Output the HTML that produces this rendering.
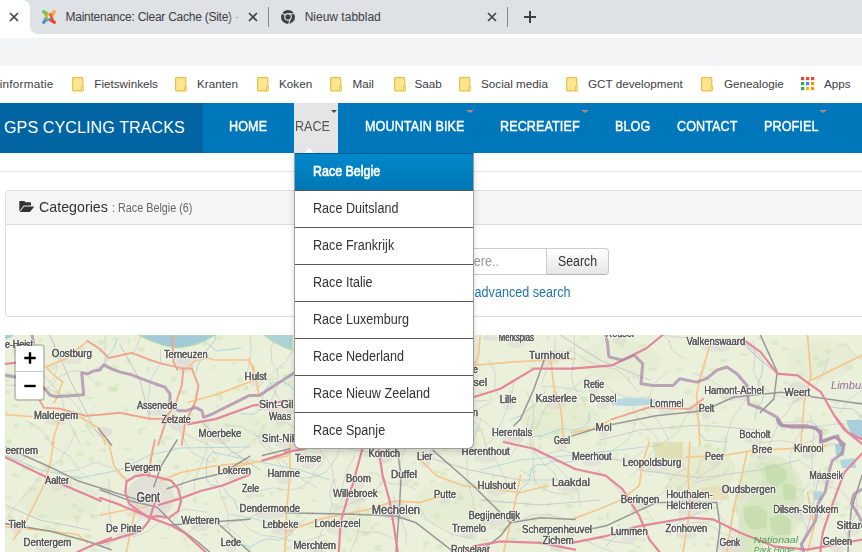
<!DOCTYPE html>
<html><head><meta charset="utf-8">
<style>
*{box-sizing:border-box}
html,body{margin:0;padding:0;width:862px;height:552px;overflow:hidden;background:#fff;font-family:"Liberation Sans",sans-serif}
.a{position:absolute}
#tabs{left:0;top:0;width:862px;height:34px;background:#dee1e6}
.tt{font-size:12px;color:#3c4043;white-space:nowrap}
#omni{left:0;top:38px;width:862px;height:28px;background:#f1f3f4}
.bm{font-size:11.7px;color:#3c4043;white-space:nowrap;top:77px}
.fold{top:77px;width:12px;height:15px}
#nav{left:0;top:103px;width:862px;height:50px;background:#0077bb}
#brand{left:0;top:103px;width:203px;height:50px;background:#0065a2}
.ni{color:#fff;font-weight:normal;-webkit-text-stroke:.45px #fff;font-size:15px;top:117px;white-space:nowrap;letter-spacing:.1px;transform:scaleX(.84);transform-origin:0 0}
.car{width:0;height:0;border-left:4px solid transparent;border-right:4px solid transparent;border-top:3.5px solid #a88f7f}
#dd{left:294px;top:153px;width:180px;height:296px;background:#fff;border:1px solid rgba(0,0,0,.38);border-top:none;border-radius:0 0 6px 6px;box-shadow:0 3px 6px rgba(0,0,0,.15)}
.di{position:absolute;left:0;width:178px;height:37px;border-top:1px solid #555;font-size:14px;color:#333;padding-left:18px;line-height:35px;white-space:nowrap}.di span{display:inline-block;transform:scaleX(.9);transform-origin:0 50%}.sx{display:inline-block;transform-origin:0 50%}
.lb{fill:#5a5a5a;stroke:#fff;stroke-width:2.4px;stroke-opacity:.65;paint-order:stroke;stroke-linejoin:round}.lt{fill:#5a5a5a;stroke:#5a5a5a;stroke-width:.3px}
</style></head><body>
<!-- tab strip -->
<div class="a" id="tabs"></div>
<div class="a" style="left:0;top:0;width:30px;height:38px;background:#fff;border-top-right-radius:8px"></div>
<div class="a" style="left:30px;top:26px;width:8px;height:8px;background:#fff"></div>
<div class="a" style="left:30px;top:18px;width:16px;height:16px;background:#dee1e6;border-bottom-left-radius:8px"></div>
<svg class="a" style="left:9px;top:12px" width="10" height="10" viewBox="0 0 10 10"><path d="M1 1L9 9M9 1L1 9" stroke="#3c4043" stroke-width="1.6"/></svg>
<svg class="a" style="left:41px;top:9px" width="16" height="16" viewBox="0 0 16 16" fill="none" stroke-linecap="round" stroke-linejoin="round" stroke-width="2.1">
<path d="M2.6 13.4L4.2 9.6M3.6 12.4L10.6 9.4" stroke="#5091cd"/>
<path d="M2.6 2.6L6.4 4.2M3.6 3.6L6.6 10.6" stroke="#7ac143"/>
<path d="M13.4 2.6L11.8 6.4M12.4 3.6L5.4 6.6" stroke="#f9a541"/>
<path d="M13.4 13.4L9.6 11.8M12.4 12.4L9.4 5.4" stroke="#f44321"/>
<circle cx="2.8" cy="2.8" r="1.7" fill="#7ac143"/><circle cx="13.2" cy="2.8" r="1.7" fill="#f9a541"/><circle cx="13.2" cy="13.2" r="1.7" fill="#f44321"/><circle cx="2.8" cy="13.2" r="1.7" fill="#5091cd"/>
</svg>
<div class="a tt" style="left:65.5px;top:10px;letter-spacing:-0.25px">Maintenance: Clear Cache (Site) - Ad</div>
<div class="a" style="left:230px;top:4px;width:14px;height:26px;background:linear-gradient(90deg,rgba(222,225,230,0.3),#dee1e6 80%)"></div>
<div class="a" style="left:244px;top:4px;width:22px;height:26px;background:#dee1e6"></div>
<svg class="a" style="left:248px;top:12px" width="10" height="10" viewBox="0 0 10 10"><path d="M1 1L9 9M9 1L1 9" stroke="#3c4043" stroke-width="1.6"/></svg>
<div class="a" style="left:268px;top:7px;width:1px;height:20px;background:#80868b"></div>
<svg class="a" style="left:280px;top:9px" width="16" height="16" viewBox="0 0 16 16">
<circle cx="8" cy="7.9" r="7" fill="#3c4043"/>
<circle cx="8" cy="7.9" r="3.8" fill="#dee1e6"/>
<circle cx="8" cy="7.9" r="2.6" fill="#3c4043"/>
<path d="M8.2 4.7H15.6M5.2 6.3L1.3 3.6M10.1 10.6L8.6 15.2" stroke="#dee1e6" stroke-width="1.1"/>
</svg>
<div class="a tt" style="left:304.7px;top:10px;">Nieuw tabblad</div>
<svg class="a" style="left:487px;top:12px" width="10" height="10" viewBox="0 0 10 10"><path d="M1 1L9 9M9 1L1 9" stroke="#3c4043" stroke-width="1.6"/></svg>
<div class="a" style="left:507px;top:7px;width:1px;height:20px;background:#80868b"></div>
<svg class="a" style="left:523px;top:10px" width="14" height="14" viewBox="0 0 14 14"><path d="M7 1V13M1 7H13" stroke="#3c4043" stroke-width="2"/></svg>
<!-- toolbar -->
<div class="a" id="omni"></div>
<!-- bookmarks -->
<div class="a bm" style="right:808.5px;letter-spacing:.25px">informatie</div>
<svg class="a fold" style="left:72px" width="12" height="15" viewBox="0 0 12 15"><rect x="0.6" y="0.6" width="10.2" height="13.3" rx="0.8" fill="#fde68f" stroke="#e9c04a" stroke-width="1.2"/><rect x="9.4" y="9.2" width="2.3" height="4.8" rx="0.8" fill="#fde68f" stroke="#e9c04a" stroke-width="1"/></svg><div class="a bm" style="left:94.3px">Fietswinkels</div>
<svg class="a fold" style="left:175px" width="12" height="15" viewBox="0 0 12 15"><rect x="0.6" y="0.6" width="10.2" height="13.3" rx="0.8" fill="#fde68f" stroke="#e9c04a" stroke-width="1.2"/><rect x="9.4" y="9.2" width="2.3" height="4.8" rx="0.8" fill="#fde68f" stroke="#e9c04a" stroke-width="1"/></svg><div class="a bm" style="left:197px">Kranten</div>
<svg class="a fold" style="left:256.5px" width="12" height="15" viewBox="0 0 12 15"><rect x="0.6" y="0.6" width="10.2" height="13.3" rx="0.8" fill="#fde68f" stroke="#e9c04a" stroke-width="1.2"/><rect x="9.4" y="9.2" width="2.3" height="4.8" rx="0.8" fill="#fde68f" stroke="#e9c04a" stroke-width="1"/></svg><div class="a bm" style="left:279px">Koken</div>
<svg class="a fold" style="left:330px" width="12" height="15" viewBox="0 0 12 15"><rect x="0.6" y="0.6" width="10.2" height="13.3" rx="0.8" fill="#fde68f" stroke="#e9c04a" stroke-width="1.2"/><rect x="9.4" y="9.2" width="2.3" height="4.8" rx="0.8" fill="#fde68f" stroke="#e9c04a" stroke-width="1"/></svg><div class="a bm" style="left:352.5px">Mail</div>
<svg class="a fold" style="left:394px" width="12" height="15" viewBox="0 0 12 15"><rect x="0.6" y="0.6" width="10.2" height="13.3" rx="0.8" fill="#fde68f" stroke="#e9c04a" stroke-width="1.2"/><rect x="9.4" y="9.2" width="2.3" height="4.8" rx="0.8" fill="#fde68f" stroke="#e9c04a" stroke-width="1"/></svg><div class="a bm" style="left:414.5px">Saab</div>
<svg class="a fold" style="left:458.5px" width="12" height="15" viewBox="0 0 12 15"><rect x="0.6" y="0.6" width="10.2" height="13.3" rx="0.8" fill="#fde68f" stroke="#e9c04a" stroke-width="1.2"/><rect x="9.4" y="9.2" width="2.3" height="4.8" rx="0.8" fill="#fde68f" stroke="#e9c04a" stroke-width="1"/></svg><div class="a bm" style="left:481px">Social media</div>
<svg class="a fold" style="left:566px" width="12" height="15" viewBox="0 0 12 15"><rect x="0.6" y="0.6" width="10.2" height="13.3" rx="0.8" fill="#fde68f" stroke="#e9c04a" stroke-width="1.2"/><rect x="9.4" y="9.2" width="2.3" height="4.8" rx="0.8" fill="#fde68f" stroke="#e9c04a" stroke-width="1"/></svg><div class="a bm" style="left:588px">GCT development</div>
<svg class="a fold" style="left:701px" width="12" height="15" viewBox="0 0 12 15"><rect x="0.6" y="0.6" width="10.2" height="13.3" rx="0.8" fill="#fde68f" stroke="#e9c04a" stroke-width="1.2"/><rect x="9.4" y="9.2" width="2.3" height="4.8" rx="0.8" fill="#fde68f" stroke="#e9c04a" stroke-width="1"/></svg><div class="a bm" style="left:724px">Genealogie</div>
<svg class="a" style="left:800px;top:76px" width="15" height="15" viewBox="0 0 15 15"><rect x="1" y="1" width="3.2" height="3.2" fill="#ea4335"/><rect x="6" y="1" width="3.2" height="3.2" fill="#ea4335"/><rect x="11" y="1" width="3.2" height="3.2" fill="#ea4335"/><rect x="1" y="6" width="3.2" height="3.2" fill="#34a853"/><rect x="6" y="6" width="3.2" height="3.2" fill="#4285f4"/><rect x="11" y="6" width="3.2" height="3.2" fill="#f29900"/><rect x="1" y="11" width="3.2" height="3.2" fill="#34a853"/><rect x="6" y="11" width="3.2" height="3.2" fill="#fbbc04"/><rect x="11" y="11" width="3.2" height="3.2" fill="#f29900"/></svg>
<div class="a bm" style="left:824px">Apps</div>
<!-- nav -->
<div class="a" id="nav"></div>
<div class="a" id="brand"></div>
<div class="a" style="left:4px;top:119px;font-size:16px;color:#fff;white-space:nowrap;letter-spacing:.14px">GPS CYCLING TRACKS</div>
<div class="a ni" style="left:229px">HOME</div>
<div class="a" style="left:294px;top:103px;width:44px;height:50px;background:#e5e5e5"></div>
<div class="a ni" style="left:295px;color:#555;-webkit-text-stroke:0;letter-spacing:0;transform:scaleX(.84)">RACE</div>
<div class="a car" style="left:331px;top:110px;border-top-color:#4a4a4a;border-top-width:3.5px;border-left-width:3.3px;border-right-width:3.3px"></div>
<div class="a ni" style="left:365px">MOUNTAIN BIKE</div>
<div class="a car" style="left:465.5px;top:110px"></div>
<div class="a ni" style="left:500px">RECREATIEF</div>
<div class="a car" style="left:581px;top:110px"></div>
<div class="a ni" style="left:615px">BLOG</div>
<div class="a ni" style="left:677px">CONTACT</div>
<div class="a ni" style="left:764px">PROFIEL</div>
<div class="a car" style="left:819px;top:110px"></div>
<!-- page -->
<div class="a" style="left:0;top:171px;width:862px;height:1px;background:#e5e5e5"></div>
<div class="a" style="left:5px;top:190px;width:870px;height:127px;border:1px solid #ddd;border-radius:4px;background:#fff"></div>
<div class="a" style="left:6px;top:191px;width:870px;height:34px;background:#f5f5f5;border-bottom:1px solid #ddd;border-radius:3px 0 0 0"></div>
<svg class="a" style="left:19px;top:200px" width="16" height="13" viewBox="0 0 16 13"><path d="M0.3 1.5Q0.3 0.9 0.9 0.9H5.4L6.6 2.3H11.3Q12 2.3 12 3V5.5H4.7L0.3 11.3Z" fill="#333"/><path d="M5.1 6.5H15.3L10.9 12H0.7Z" fill="#333"/></svg>
<div class="a" style="left:39px;top:198px;font-size:15px;color:#333;white-space:nowrap"><span class="sx" style="transform:scaleX(.95)">Categories</span></div>
<div class="a" style="left:112px;top:201px;font-size:12px;color:#666;white-space:nowrap"><span class="sx" style="transform:scaleX(.9)">: Race Belgie (6)</span></div>
<div class="a" style="left:420px;top:248px;width:127px;height:27px;border:1px solid #ccc;background:#fff;font-size:14px;color:#999;line-height:25px;overflow:hidden"><span class="sx" style="position:absolute;right:47px;transform:scaleX(.9);transform-origin:100% 50%;white-space:nowrap">Search here..</span></div>
<div class="a" style="left:546px;top:248px;width:63px;height:27px;border:1px solid #ccc;border-bottom-color:#b3b3b3;border-radius:0 4px 4px 0;background:linear-gradient(#fff,#e6e6e6);font-size:14px;color:#333;line-height:25px;padding-left:11px;white-space:nowrap"><span class="sx" style="transform:scaleX(.88)">Search</span></div>
<div class="a" style="left:420px;top:284px;font-size:14px;color:#1f72b4;white-space:nowrap;width:151px;text-align:right"><span class="sx" style="transform:scaleX(.9);transform-origin:100% 50%">Show advanced search</span></div>
<!-- map -->
<div class="a" style="left:5px;top:335px;width:857px;height:217px;overflow:hidden;background:#ebf0db"><svg style="position:absolute;left:0;top:0;filter:blur(.35px)" width="857" height="217" viewBox="5 335 857 217" font-family="Liberation Sans, sans-serif"><rect x="5" y="335" width="857" height="217" fill="#ebf0db"/><ellipse cx="60" cy="500" rx="40" ry="20" fill="#e2ebcf" opacity=".6"/><ellipse cx="250" cy="430" rx="50" ry="15" fill="#e3ecd0" opacity=".6"/><ellipse cx="460" cy="505" rx="45" ry="25" fill="#e1ebce" opacity=".6"/><ellipse cx="560" cy="420" rx="40" ry="20" fill="#e0eacc" opacity=".6"/><ellipse cx="620" cy="360" rx="40" ry="20" fill="#e2ebcf" opacity=".6"/><ellipse cx="770" cy="500" rx="35" ry="45" fill="#d8e6c2" opacity=".6"/><ellipse cx="700" cy="470" rx="35" ry="25" fill="#e0e7c6" opacity=".6"/><ellipse cx="19.0" cy="351.0" rx="7.0" ry="4.0" fill="#dcd9d3" opacity=".55"/><ellipse cx="71.9" cy="359.9" rx="10.1" ry="4.0" fill="#dcd9d3" opacity=".55"/><ellipse cx="185.8" cy="360.5" rx="10.9" ry="4.0" fill="#dcd9d3" opacity=".55"/><ellipse cx="255.7" cy="383.4" rx="5.6" ry="4.0" fill="#dcd9d3" opacity=".55"/><ellipse cx="157.2" cy="412.0" rx="10.1" ry="4.0" fill="#dcd9d3" opacity=".55"/><ellipse cx="176.2" cy="426.1" rx="7.3" ry="4.0" fill="#dcd9d3" opacity=".55"/><ellipse cx="56.0" cy="421.7" rx="11.0" ry="4.0" fill="#dcd9d3" opacity=".55"/><ellipse cx="283.0" cy="411.0" rx="12.0" ry="4.0" fill="#dcd9d3" opacity=".55"/><ellipse cx="280.0" cy="422.8" rx="5.5" ry="4.0" fill="#dcd9d3" opacity=".55"/><ellipse cx="219.9" cy="440.2" rx="10.7" ry="4.0" fill="#dcd9d3" opacity=".55"/><ellipse cx="288.4" cy="444.6" rx="13.3" ry="4.0" fill="#dcd9d3" opacity=".55"/><ellipse cx="18.5" cy="457.0" rx="9.8" ry="4.0" fill="#dcd9d3" opacity=".55"/><ellipse cx="57.0" cy="487.0" rx="6.0" ry="4.0" fill="#dcd9d3" opacity=".55"/><ellipse cx="142.7" cy="474.4" rx="9.1" ry="4.0" fill="#dcd9d3" opacity=".55"/><ellipse cx="148.2" cy="503.4" rx="5.9" ry="4.0" fill="#dcd9d3" opacity=".55"/><ellipse cx="234.3" cy="477.0" rx="8.3" ry="4.0" fill="#dcd9d3" opacity=".55"/><ellipse cx="283.8" cy="480.0" rx="8.1" ry="4.0" fill="#dcd9d3" opacity=".55"/><ellipse cx="250.5" cy="495.0" rx="5.0" ry="4.0" fill="#dcd9d3" opacity=".55"/><ellipse cx="269.8" cy="515.0" rx="15.1" ry="4.0" fill="#dcd9d3" opacity=".55"/><ellipse cx="17.2" cy="530.8" rx="5.0" ry="4.0" fill="#dcd9d3" opacity=".55"/><ellipse cx="123.8" cy="534.7" rx="8.9" ry="4.0" fill="#dcd9d3" opacity=".55"/><ellipse cx="200.4" cy="527.2" rx="9.6" ry="4.0" fill="#dcd9d3" opacity=".55"/><ellipse cx="280.4" cy="531.0" rx="9.0" ry="4.0" fill="#dcd9d3" opacity=".55"/><ellipse cx="47.5" cy="549.0" rx="11.9" ry="4.0" fill="#dcd9d3" opacity=".55"/><ellipse cx="230.9" cy="548.5" rx="5.1" ry="4.0" fill="#dcd9d3" opacity=".55"/><ellipse cx="308.1" cy="465.0" rx="6.6" ry="4.0" fill="#dcd9d3" opacity=".55"/><ellipse cx="384.2" cy="460.0" rx="7.9" ry="4.0" fill="#dcd9d3" opacity=".55"/><ellipse cx="424.7" cy="463.0" rx="5.0" ry="4.0" fill="#dcd9d3" opacity=".55"/><ellipse cx="485.7" cy="458.4" rx="12.0" ry="4.0" fill="#dcd9d3" opacity=".55"/><ellipse cx="358.4" cy="485.0" rx="6.2" ry="4.0" fill="#dcd9d3" opacity=".55"/><ellipse cx="404.0" cy="481.0" rx="6.5" ry="4.0" fill="#dcd9d3" opacity=".55"/><ellipse cx="355.2" cy="500.0" rx="11.1" ry="4.0" fill="#dcd9d3" opacity=".55"/><ellipse cx="496.8" cy="491.7" rx="9.6" ry="4.0" fill="#dcd9d3" opacity=".55"/><ellipse cx="571.0" cy="489.4" rx="9.5" ry="4.0" fill="#dcd9d3" opacity=".55"/><ellipse cx="445.0" cy="501.0" rx="5.5" ry="4.0" fill="#dcd9d3" opacity=".55"/><ellipse cx="395.9" cy="516.3" rx="12.0" ry="4.0" fill="#dcd9d3" opacity=".55"/><ellipse cx="494.2" cy="522.0" rx="12.9" ry="4.0" fill="#dcd9d3" opacity=".55"/><ellipse cx="337.6" cy="529.8" rx="11.5" ry="4.0" fill="#dcd9d3" opacity=".55"/><ellipse cx="469.0" cy="534.8" rx="8.5" ry="4.0" fill="#dcd9d3" opacity=".55"/><ellipse cx="557.0" cy="535.8" rx="17.5" ry="4.0" fill="#dcd9d3" opacity=".55"/><ellipse cx="314.7" cy="551.6" rx="10.7" ry="4.0" fill="#dcd9d3" opacity=".55"/><ellipse cx="558.0" cy="547.0" rx="7.8" ry="4.0" fill="#dcd9d3" opacity=".55"/><ellipse cx="470.4" cy="556.0" rx="9.8" ry="4.0" fill="#dcd9d3" opacity=".55"/><ellipse cx="516.4" cy="343.7" rx="8.8" ry="4.0" fill="#dcd9d3" opacity=".55"/><ellipse cx="549.1" cy="361.5" rx="10.1" ry="4.0" fill="#dcd9d3" opacity=".55"/><ellipse cx="464.0" cy="376.0" rx="7.0" ry="4.0" fill="#dcd9d3" opacity=".55"/><ellipse cx="461.0" cy="389.0" rx="13.0" ry="4.0" fill="#dcd9d3" opacity=".55"/><ellipse cx="454.0" cy="419.0" rx="12.0" ry="4.0" fill="#dcd9d3" opacity=".55"/><ellipse cx="508.1" cy="406.0" rx="5.0" ry="4.0" fill="#dcd9d3" opacity=".55"/><ellipse cx="556.4" cy="405.0" rx="10.3" ry="4.0" fill="#dcd9d3" opacity=".55"/><ellipse cx="512.1" cy="439.0" rx="10.1" ry="4.0" fill="#dcd9d3" opacity=".55"/><ellipse cx="562.0" cy="447.0" rx="5.0" ry="4.0" fill="#dcd9d3" opacity=".55"/><ellipse cx="591.9" cy="462.5" rx="9.9" ry="4.0" fill="#dcd9d3" opacity=".55"/><ellipse cx="619.8" cy="340.0" rx="7.1" ry="4.0" fill="#dcd9d3" opacity=".55"/><ellipse cx="715.8" cy="347.7" rx="14.7" ry="4.0" fill="#dcd9d3" opacity=".55"/><ellipse cx="593.9" cy="390.8" rx="5.1" ry="4.0" fill="#dcd9d3" opacity=".55"/><ellipse cx="603.0" cy="405.3" rx="6.7" ry="4.0" fill="#dcd9d3" opacity=".55"/><ellipse cx="666.9" cy="410.3" rx="8.4" ry="4.0" fill="#dcd9d3" opacity=".55"/><ellipse cx="706.5" cy="415.4" rx="5.0" ry="4.0" fill="#dcd9d3" opacity=".55"/><ellipse cx="734.0" cy="396.8" rx="14.9" ry="4.0" fill="#dcd9d3" opacity=".55"/><ellipse cx="797.4" cy="398.5" rx="6.4" ry="4.0" fill="#dcd9d3" opacity=".55"/><ellipse cx="603.7" cy="433.5" rx="5.0" ry="4.0" fill="#dcd9d3" opacity=".55"/><ellipse cx="754.9" cy="440.6" rx="7.8" ry="4.0" fill="#dcd9d3" opacity=".55"/><ellipse cx="652.0" cy="469.2" rx="14.7" ry="4.0" fill="#dcd9d3" opacity=".55"/><ellipse cx="714.5" cy="462.5" rx="5.0" ry="4.0" fill="#dcd9d3" opacity=".55"/><ellipse cx="762.1" cy="456.4" rx="5.1" ry="4.0" fill="#dcd9d3" opacity=".55"/><ellipse cx="808.9" cy="455.0" rx="7.4" ry="4.0" fill="#dcd9d3" opacity=".55"/><ellipse cx="826.1" cy="481.6" rx="8.4" ry="4.0" fill="#dcd9d3" opacity=".55"/><ellipse cx="640.1" cy="506.2" rx="9.7" ry="4.0" fill="#dcd9d3" opacity=".55"/><ellipse cx="689.4" cy="501.2" rx="11.6" ry="4.0" fill="#dcd9d3" opacity=".55"/><ellipse cx="689.4" cy="512.0" rx="11.6" ry="4.0" fill="#dcd9d3" opacity=".55"/><ellipse cx="748.7" cy="496.0" rx="13.5" ry="4.0" fill="#dcd9d3" opacity=".55"/><ellipse cx="805.9" cy="516.3" rx="16.3" ry="4.0" fill="#dcd9d3" opacity=".55"/><ellipse cx="851.7" cy="532.2" rx="7.7" ry="4.0" fill="#dcd9d3" opacity=".55"/><ellipse cx="629.2" cy="538.2" rx="9.2" ry="4.0" fill="#dcd9d3" opacity=".55"/><ellipse cx="686.4" cy="534.8" rx="10.4" ry="4.0" fill="#dcd9d3" opacity=".55"/><ellipse cx="729.8" cy="549.3" rx="5.2" ry="4.0" fill="#dcd9d3" opacity=".55"/><ellipse cx="837.4" cy="548.3" rx="7.3" ry="4.0" fill="#dcd9d3" opacity=".55"/><ellipse cx="820" cy="360" rx="35" ry="20" fill="#e2ebcf" opacity=".6"/><ellipse cx="540" cy="530" rx="30" ry="15" fill="#e2ebcf" opacity=".6"/><ellipse cx="350" cy="520" rx="20" ry="20" fill="#e2ebcf" opacity=".6"/><ellipse cx="282.5" cy="367.7" rx="3.3" ry="1.2" fill="#cfe3b8" opacity=".5"/><ellipse cx="464.3" cy="414.4" rx="1.4" ry="2.1" fill="#cfe3b8" opacity=".5"/><ellipse cx="37.1" cy="429.1" rx="1.4" ry="1.2" fill="#cfe3b8" opacity=".5"/><ellipse cx="368.8" cy="514.4" rx="1.6" ry="1.5" fill="#cfe3b8" opacity=".5"/><ellipse cx="542.7" cy="540.7" rx="3.1" ry="1.9" fill="#cfe3b8" opacity=".5"/><ellipse cx="841.7" cy="345.1" rx="4.0" ry="1.6" fill="#cfe3b8" opacity=".5"/><ellipse cx="128.6" cy="360.6" rx="2.2" ry="2.8" fill="#cfe3b8" opacity=".5"/><ellipse cx="159.9" cy="461.2" rx="3.3" ry="1.8" fill="#cfe3b8" opacity=".5"/><ellipse cx="474.4" cy="348.6" rx="1.4" ry="1.5" fill="#cfe3b8" opacity=".5"/><ellipse cx="588.1" cy="427.8" rx="2.2" ry="2.3" fill="#cfe3b8" opacity=".5"/><ellipse cx="393.4" cy="400.0" rx="3.8" ry="2.5" fill="#cfe3b8" opacity=".5"/><ellipse cx="214.2" cy="459.6" rx="2.9" ry="2.9" fill="#cfe3b8" opacity=".5"/><ellipse cx="630.1" cy="397.5" rx="4.4" ry="1.3" fill="#cfe3b8" opacity=".5"/><ellipse cx="363.3" cy="499.3" rx="1.7" ry="2.1" fill="#cfe3b8" opacity=".5"/><ellipse cx="38.6" cy="480.0" rx="3.7" ry="2.3" fill="#cfe3b8" opacity=".5"/><ellipse cx="755.3" cy="403.1" rx="3.5" ry="2.3" fill="#cfe3b8" opacity=".5"/><ellipse cx="502.0" cy="434.0" rx="4.0" ry="3.1" fill="#cfe3b8" opacity=".5"/><ellipse cx="411.3" cy="479.1" rx="1.4" ry="2.5" fill="#cfe3b8" opacity=".5"/><ellipse cx="559.6" cy="550.5" rx="3.9" ry="1.6" fill="#cfe3b8" opacity=".5"/><ellipse cx="335.6" cy="480.1" rx="1.3" ry="2.0" fill="#cfe3b8" opacity=".5"/><ellipse cx="149.0" cy="360.4" rx="1.4" ry="2.7" fill="#cfe3b8" opacity=".5"/><ellipse cx="115.8" cy="388.7" rx="2.5" ry="2.9" fill="#cfe3b8" opacity=".5"/><ellipse cx="74.1" cy="432.5" rx="3.0" ry="2.9" fill="#cfe3b8" opacity=".5"/><ellipse cx="707.1" cy="522.5" rx="2.1" ry="1.9" fill="#cfe3b8" opacity=".5"/><ellipse cx="312.5" cy="526.9" rx="4.4" ry="1.3" fill="#cfe3b8" opacity=".5"/><ellipse cx="156.0" cy="385.3" rx="2.0" ry="2.1" fill="#cfe3b8" opacity=".5"/><ellipse cx="509.9" cy="392.0" rx="1.2" ry="1.9" fill="#cfe3b8" opacity=".5"/><ellipse cx="321.5" cy="457.9" rx="4.3" ry="2.5" fill="#cfe3b8" opacity=".5"/><ellipse cx="446.8" cy="469.0" rx="3.4" ry="1.1" fill="#cfe3b8" opacity=".5"/><ellipse cx="775.9" cy="504.3" rx="4.1" ry="2.8" fill="#cfe3b8" opacity=".5"/><ellipse cx="341.3" cy="421.6" rx="1.5" ry="2.4" fill="#cfe3b8" opacity=".5"/><ellipse cx="58.3" cy="349.6" rx="1.9" ry="1.4" fill="#cfe3b8" opacity=".5"/><ellipse cx="296.4" cy="346.4" rx="1.2" ry="1.3" fill="#cfe3b8" opacity=".5"/><ellipse cx="92.0" cy="413.9" rx="1.3" ry="2.9" fill="#cfe3b8" opacity=".5"/><ellipse cx="531.3" cy="367.2" rx="2.0" ry="1.8" fill="#cfe3b8" opacity=".5"/><ellipse cx="317.1" cy="361.7" rx="4.0" ry="3.2" fill="#cfe3b8" opacity=".5"/><ellipse cx="404.4" cy="440.0" rx="1.5" ry="1.2" fill="#cfe3b8" opacity=".5"/><ellipse cx="298.6" cy="392.5" rx="3.9" ry="1.4" fill="#cfe3b8" opacity=".5"/><ellipse cx="24.8" cy="541.4" rx="2.9" ry="1.3" fill="#cfe3b8" opacity=".5"/><ellipse cx="470.5" cy="340.9" rx="2.9" ry="3.2" fill="#cfe3b8" opacity=".5"/><ellipse cx="744.9" cy="486.1" rx="2.1" ry="1.8" fill="#cfe3b8" opacity=".5"/><ellipse cx="148.2" cy="502.5" rx="3.0" ry="2.7" fill="#cfe3b8" opacity=".5"/><ellipse cx="287.5" cy="383.4" rx="3.9" ry="3.2" fill="#cfe3b8" opacity=".5"/><ellipse cx="735.7" cy="509.9" rx="3.9" ry="2.6" fill="#cfe3b8" opacity=".5"/><ellipse cx="199.3" cy="447.3" rx="2.4" ry="1.1" fill="#cfe3b8" opacity=".5"/><ellipse cx="28.9" cy="395.6" rx="2.1" ry="2.5" fill="#cfe3b8" opacity=".5"/><ellipse cx="824.7" cy="432.0" rx="4.3" ry="3.2" fill="#cfe3b8" opacity=".5"/><ellipse cx="823.4" cy="414.1" rx="1.9" ry="1.5" fill="#cfe3b8" opacity=".5"/><ellipse cx="173.6" cy="379.3" rx="3.3" ry="3.0" fill="#cfe3b8" opacity=".5"/><ellipse cx="725.3" cy="439.0" rx="3.4" ry="2.8" fill="#cfe3b8" opacity=".5"/><ellipse cx="77.7" cy="478.3" rx="4.2" ry="2.7" fill="#cfe3b8" opacity=".5"/><ellipse cx="647.9" cy="438.7" rx="1.8" ry="2.7" fill="#cfe3b8" opacity=".5"/><ellipse cx="290.0" cy="508.8" rx="4.4" ry="1.9" fill="#cfe3b8" opacity=".5"/><ellipse cx="349.0" cy="540.5" rx="3.6" ry="1.4" fill="#cfe3b8" opacity=".5"/><ellipse cx="113.9" cy="367.8" rx="4.2" ry="2.8" fill="#cfe3b8" opacity=".5"/><ellipse cx="130.3" cy="514.4" rx="4.4" ry="2.4" fill="#cfe3b8" opacity=".5"/><ellipse cx="305.3" cy="454.1" rx="1.6" ry="1.0" fill="#cfe3b8" opacity=".5"/><ellipse cx="837.1" cy="476.0" rx="2.9" ry="3.1" fill="#cfe3b8" opacity=".5"/><ellipse cx="376.8" cy="524.2" rx="3.9" ry="1.5" fill="#cfe3b8" opacity=".5"/><ellipse cx="220.8" cy="398.6" rx="2.0" ry="2.3" fill="#cfe3b8" opacity=".5"/><ellipse cx="227.3" cy="425.9" rx="1.6" ry="3.0" fill="#cfe3b8" opacity=".5"/><ellipse cx="308.2" cy="434.4" rx="3.1" ry="3.0" fill="#cfe3b8" opacity=".5"/><ellipse cx="365.5" cy="534.1" rx="2.9" ry="2.2" fill="#cfe3b8" opacity=".5"/><ellipse cx="453.6" cy="339.1" rx="2.7" ry="1.4" fill="#cfe3b8" opacity=".5"/><ellipse cx="8.4" cy="508.4" rx="1.8" ry="2.0" fill="#cfe3b8" opacity=".5"/><ellipse cx="626.5" cy="455.8" rx="2.3" ry="2.1" fill="#cfe3b8" opacity=".5"/><ellipse cx="481.0" cy="505.2" rx="1.6" ry="2.2" fill="#cfe3b8" opacity=".5"/><ellipse cx="218.0" cy="395.1" rx="3.7" ry="2.1" fill="#cfe3b8" opacity=".5"/><ellipse cx="486.4" cy="499.9" rx="4.2" ry="2.0" fill="#cfe3b8" opacity=".5"/><ellipse cx="529.9" cy="444.7" rx="2.9" ry="2.5" fill="#cfe3b8" opacity=".5"/><ellipse cx="392.7" cy="450.7" rx="2.8" ry="3.1" fill="#cfe3b8" opacity=".5"/><ellipse cx="604.2" cy="525.2" rx="4.3" ry="1.6" fill="#cfe3b8" opacity=".5"/><ellipse cx="484.5" cy="539.7" rx="4.0" ry="1.3" fill="#cfe3b8" opacity=".5"/><ellipse cx="109.2" cy="430.9" rx="1.4" ry="1.5" fill="#cfe3b8" opacity=".5"/><ellipse cx="67.7" cy="480.3" rx="3.8" ry="3.0" fill="#cfe3b8" opacity=".5"/><ellipse cx="137.4" cy="490.4" rx="3.4" ry="1.3" fill="#cfe3b8" opacity=".5"/><ellipse cx="761.6" cy="545.0" rx="1.9" ry="3.1" fill="#cfe3b8" opacity=".5"/><ellipse cx="346.3" cy="440.7" rx="4.5" ry="2.8" fill="#cfe3b8" opacity=".5"/><ellipse cx="143.4" cy="428.6" rx="2.9" ry="1.7" fill="#cfe3b8" opacity=".5"/><ellipse cx="172.8" cy="404.1" rx="3.6" ry="1.0" fill="#cfe3b8" opacity=".5"/><ellipse cx="479.8" cy="430.6" rx="1.3" ry="1.7" fill="#cfe3b8" opacity=".5"/><ellipse cx="539.7" cy="446.2" rx="1.4" ry="3.2" fill="#cfe3b8" opacity=".5"/><ellipse cx="680.6" cy="545.9" rx="1.5" ry="1.6" fill="#cfe3b8" opacity=".5"/><ellipse cx="38.9" cy="504.0" rx="2.1" ry="1.3" fill="#cfe3b8" opacity=".5"/><ellipse cx="366.9" cy="532.8" rx="3.9" ry="1.6" fill="#cfe3b8" opacity=".5"/><ellipse cx="133.0" cy="534.5" rx="3.1" ry="2.5" fill="#cfe3b8" opacity=".5"/><ellipse cx="81.7" cy="347.5" rx="3.5" ry="1.9" fill="#cfe3b8" opacity=".5"/><ellipse cx="67.1" cy="538.6" rx="3.3" ry="2.8" fill="#cfe3b8" opacity=".5"/><ellipse cx="76.8" cy="520.8" rx="1.4" ry="2.9" fill="#cfe3b8" opacity=".5"/><ellipse cx="393.9" cy="408.6" rx="3.0" ry="3.0" fill="#cfe3b8" opacity=".5"/><ellipse cx="234.6" cy="363.0" rx="2.9" ry="1.5" fill="#cfe3b8" opacity=".5"/><ellipse cx="98.8" cy="370.0" rx="1.4" ry="1.4" fill="#cfe3b8" opacity=".5"/><ellipse cx="272.4" cy="401.2" rx="3.7" ry="1.6" fill="#cfe3b8" opacity=".5"/><ellipse cx="433.6" cy="373.6" rx="2.3" ry="1.0" fill="#cfe3b8" opacity=".5"/><ellipse cx="219.6" cy="338.3" rx="3.6" ry="2.2" fill="#cfe3b8" opacity=".5"/><ellipse cx="167.4" cy="438.0" rx="4.3" ry="1.2" fill="#cfe3b8" opacity=".5"/><ellipse cx="706.8" cy="428.8" rx="2.8" ry="2.8" fill="#cfe3b8" opacity=".5"/><ellipse cx="341.9" cy="445.0" rx="3.5" ry="3.2" fill="#cfe3b8" opacity=".5"/><ellipse cx="298.7" cy="515.6" rx="3.5" ry="2.4" fill="#cfe3b8" opacity=".5"/><ellipse cx="351.8" cy="410.4" rx="1.4" ry="1.3" fill="#cfe3b8" opacity=".5"/><ellipse cx="65.6" cy="495.8" rx="2.0" ry="1.4" fill="#cfe3b8" opacity=".5"/><ellipse cx="77.4" cy="517.6" rx="4.1" ry="2.5" fill="#cfe3b8" opacity=".5"/><ellipse cx="246.6" cy="387.6" rx="2.2" ry="2.0" fill="#cfe3b8" opacity=".5"/><ellipse cx="140.0" cy="431.7" rx="2.1" ry="3.1" fill="#cfe3b8" opacity=".5"/><ellipse cx="838.5" cy="453.7" rx="2.0" ry="3.1" fill="#cfe3b8" opacity=".5"/><ellipse cx="270.3" cy="412.4" rx="1.2" ry="1.8" fill="#cfe3b8" opacity=".5"/><ellipse cx="411.8" cy="444.1" rx="1.9" ry="2.1" fill="#cfe3b8" opacity=".5"/><ellipse cx="9.2" cy="392.3" rx="1.5" ry="1.9" fill="#cfe3b8" opacity=".5"/><ellipse cx="40.7" cy="339.9" rx="2.2" ry="1.5" fill="#cfe3b8" opacity=".5"/><ellipse cx="506.8" cy="449.8" rx="3.7" ry="2.4" fill="#cfe3b8" opacity=".5"/><ellipse cx="618.6" cy="525.8" rx="2.5" ry="1.7" fill="#cfe3b8" opacity=".5"/><ellipse cx="848.9" cy="367.4" rx="3.6" ry="2.4" fill="#cfe3b8" opacity=".5"/><ellipse cx="42.5" cy="516.3" rx="4.1" ry="2.4" fill="#cfe3b8" opacity=".5"/><ellipse cx="633.9" cy="511.3" rx="1.7" ry="2.2" fill="#cfe3b8" opacity=".5"/><ellipse cx="437.2" cy="516.2" rx="3.9" ry="2.8" fill="#cfe3b8" opacity=".5"/><ellipse cx="505.5" cy="528.7" rx="3.5" ry="2.5" fill="#cfe3b8" opacity=".5"/><ellipse cx="202.1" cy="341.8" rx="1.6" ry="1.8" fill="#cfe3b8" opacity=".5"/><ellipse cx="94.9" cy="516.4" rx="3.0" ry="2.4" fill="#cfe3b8" opacity=".5"/><ellipse cx="541.7" cy="482.7" rx="2.8" ry="1.0" fill="#cfe3b8" opacity=".5"/><ellipse cx="688.6" cy="497.4" rx="2.9" ry="2.2" fill="#cfe3b8" opacity=".5"/><ellipse cx="570.0" cy="349.3" rx="3.6" ry="1.6" fill="#cfe3b8" opacity=".5"/><ellipse cx="68.8" cy="392.6" rx="3.6" ry="1.5" fill="#cfe3b8" opacity=".5"/><ellipse cx="639.0" cy="546.7" rx="2.8" ry="1.8" fill="#cfe3b8" opacity=".5"/><ellipse cx="415.5" cy="483.4" rx="3.7" ry="2.4" fill="#cfe3b8" opacity=".5"/><ellipse cx="555.8" cy="351.8" rx="1.7" ry="1.6" fill="#cfe3b8" opacity=".5"/><ellipse cx="641.9" cy="401.1" rx="3.1" ry="1.0" fill="#cfe3b8" opacity=".5"/><ellipse cx="57.0" cy="393.3" rx="3.4" ry="2.5" fill="#cfe3b8" opacity=".5"/><ellipse cx="584.1" cy="398.1" rx="2.9" ry="2.0" fill="#cfe3b8" opacity=".5"/><ellipse cx="404.7" cy="360.7" rx="4.1" ry="1.4" fill="#cfe3b8" opacity=".5"/><ellipse cx="843.3" cy="538.2" rx="1.3" ry="2.0" fill="#cfe3b8" opacity=".5"/><ellipse cx="707.7" cy="545.1" rx="2.7" ry="1.6" fill="#cfe3b8" opacity=".5"/><ellipse cx="184.8" cy="540.2" rx="1.9" ry="2.3" fill="#cfe3b8" opacity=".5"/><ellipse cx="126.5" cy="448.7" rx="4.3" ry="1.3" fill="#cfe3b8" opacity=".5"/><ellipse cx="707.9" cy="445.4" rx="4.1" ry="2.5" fill="#cfe3b8" opacity=".5"/><ellipse cx="203.3" cy="529.8" rx="2.8" ry="1.1" fill="#cfe3b8" opacity=".5"/><ellipse cx="8.1" cy="441.7" rx="2.7" ry="1.7" fill="#cfe3b8" opacity=".5"/><ellipse cx="125.6" cy="409.6" rx="2.2" ry="2.8" fill="#cfe3b8" opacity=".5"/><ellipse cx="6.5" cy="497.9" rx="4.0" ry="1.3" fill="#cfe3b8" opacity=".5"/><ellipse cx="798.9" cy="489.7" rx="4.2" ry="1.6" fill="#cfe3b8" opacity=".5"/><ellipse cx="324.0" cy="420.3" rx="4.5" ry="2.3" fill="#cfe3b8" opacity=".5"/><ellipse cx="314.1" cy="427.9" rx="2.1" ry="1.1" fill="#cfe3b8" opacity=".5"/><ellipse cx="92.2" cy="516.1" rx="2.1" ry="3.1" fill="#cfe3b8" opacity=".5"/><ellipse cx="218.7" cy="392.7" rx="2.9" ry="1.4" fill="#cfe3b8" opacity=".5"/><ellipse cx="325.0" cy="542.5" rx="4.1" ry="2.8" fill="#cfe3b8" opacity=".5"/><ellipse cx="545.7" cy="533.2" rx="4.3" ry="2.2" fill="#cfe3b8" opacity=".5"/><ellipse cx="621.7" cy="345.7" rx="3.6" ry="2.0" fill="#cfe3b8" opacity=".5"/><ellipse cx="650.0" cy="474.9" rx="2.1" ry="1.1" fill="#cfe3b8" opacity=".5"/><ellipse cx="799.2" cy="362.6" rx="2.8" ry="1.8" fill="#cfe3b8" opacity=".5"/><ellipse cx="260.2" cy="495.4" rx="4.4" ry="1.6" fill="#cfe3b8" opacity=".5"/><ellipse cx="567.2" cy="400.3" rx="3.0" ry="1.9" fill="#cfe3b8" opacity=".5"/><ellipse cx="148.4" cy="370.1" rx="1.9" ry="3.0" fill="#cfe3b8" opacity=".5"/><ellipse cx="431.0" cy="382.7" rx="4.2" ry="3.2" fill="#cfe3b8" opacity=".5"/><ellipse cx="390.6" cy="365.3" rx="1.8" ry="1.2" fill="#cfe3b8" opacity=".5"/><ellipse cx="298.1" cy="354.8" rx="2.0" ry="1.6" fill="#cfe3b8" opacity=".5"/><ellipse cx="493.2" cy="527.5" rx="3.7" ry="1.9" fill="#cfe3b8" opacity=".5"/><ellipse cx="359.7" cy="448.7" rx="2.4" ry="1.7" fill="#cfe3b8" opacity=".5"/><ellipse cx="58.2" cy="395.2" rx="4.4" ry="1.3" fill="#cfe3b8" opacity=".5"/><ellipse cx="436.4" cy="471.6" rx="4.0" ry="1.5" fill="#cfe3b8" opacity=".5"/><ellipse cx="237.3" cy="388.9" rx="2.5" ry="2.0" fill="#cfe3b8" opacity=".5"/><ellipse cx="822.5" cy="519.2" rx="4.1" ry="1.0" fill="#cfe3b8" opacity=".5"/><ellipse cx="32.6" cy="489.0" rx="4.2" ry="2.0" fill="#cfe3b8" opacity=".5"/><ellipse cx="508.2" cy="335.0" rx="2.5" ry="3.0" fill="#cfe3b8" opacity=".5"/><ellipse cx="712.5" cy="520.6" rx="4.4" ry="1.5" fill="#cfe3b8" opacity=".5"/><ellipse cx="98.5" cy="368.5" rx="2.9" ry="2.5" fill="#cfe3b8" opacity=".5"/><ellipse cx="811.9" cy="491.6" rx="3.3" ry="2.7" fill="#cfe3b8" opacity=".5"/><ellipse cx="396.9" cy="454.7" rx="1.3" ry="2.7" fill="#cfe3b8" opacity=".5"/><ellipse cx="204.3" cy="534.6" rx="3.3" ry="1.7" fill="#cfe3b8" opacity=".5"/><ellipse cx="114.7" cy="389.6" rx="3.3" ry="2.5" fill="#cfe3b8" opacity=".5"/><ellipse cx="101.1" cy="350.3" rx="2.9" ry="2.3" fill="#cfe3b8" opacity=".5"/><ellipse cx="337.6" cy="383.5" rx="3.2" ry="1.0" fill="#cfe3b8" opacity=".5"/><ellipse cx="263.4" cy="435.0" rx="4.4" ry="2.4" fill="#cfe3b8" opacity=".5"/><ellipse cx="762.4" cy="438.1" rx="2.0" ry="1.5" fill="#cfe3b8" opacity=".5"/><ellipse cx="828.2" cy="487.9" rx="2.2" ry="1.0" fill="#cfe3b8" opacity=".5"/><ellipse cx="432.1" cy="481.4" rx="2.6" ry="1.6" fill="#cfe3b8" opacity=".5"/><ellipse cx="576.9" cy="535.8" rx="1.9" ry="1.1" fill="#cfe3b8" opacity=".5"/><ellipse cx="294.7" cy="426.3" rx="3.5" ry="1.4" fill="#cfe3b8" opacity=".5"/><ellipse cx="688.1" cy="495.4" rx="2.9" ry="1.5" fill="#cfe3b8" opacity=".5"/><ellipse cx="836.2" cy="402.6" rx="3.9" ry="1.5" fill="#cfe3b8" opacity=".5"/><ellipse cx="194.8" cy="500.0" rx="2.2" ry="3.1" fill="#cfe3b8" opacity=".5"/><ellipse cx="429.9" cy="375.6" rx="1.9" ry="1.9" fill="#cfe3b8" opacity=".5"/><ellipse cx="575.2" cy="540.9" rx="1.7" ry="1.9" fill="#cfe3b8" opacity=".5"/><ellipse cx="187.5" cy="546.4" rx="1.7" ry="1.1" fill="#cfe3b8" opacity=".5"/><ellipse cx="56.5" cy="420.4" rx="4.2" ry="2.9" fill="#cfe3b8" opacity=".5"/><ellipse cx="632.9" cy="551.5" rx="4.3" ry="1.7" fill="#cfe3b8" opacity=".5"/><ellipse cx="164.0" cy="538.1" rx="3.7" ry="1.1" fill="#cfe3b8" opacity=".5"/><ellipse cx="574.4" cy="417.2" rx="2.4" ry="1.7" fill="#cfe3b8" opacity=".5"/><ellipse cx="150.1" cy="335.6" rx="2.1" ry="1.8" fill="#cfe3b8" opacity=".5"/><ellipse cx="823.9" cy="361.8" rx="4.4" ry="1.5" fill="#cfe3b8" opacity=".5"/><ellipse cx="310.6" cy="513.3" rx="3.9" ry="2.0" fill="#cfe3b8" opacity=".5"/><ellipse cx="47.2" cy="437.7" rx="2.4" ry="3.0" fill="#cfe3b8" opacity=".5"/><ellipse cx="170.4" cy="414.0" rx="4.2" ry="1.1" fill="#cfe3b8" opacity=".5"/><ellipse cx="357.1" cy="511.2" rx="3.7" ry="1.1" fill="#cfe3b8" opacity=".5"/><ellipse cx="34.9" cy="348.6" rx="4.2" ry="1.6" fill="#cfe3b8" opacity=".5"/><ellipse cx="645.4" cy="530.0" rx="2.3" ry="1.6" fill="#cfe3b8" opacity=".5"/><ellipse cx="825.7" cy="468.9" rx="2.1" ry="2.6" fill="#cfe3b8" opacity=".5"/><ellipse cx="276.2" cy="394.8" rx="1.2" ry="2.7" fill="#cfe3b8" opacity=".5"/><ellipse cx="790.4" cy="472.6" rx="4.3" ry="1.1" fill="#cfe3b8" opacity=".5"/><ellipse cx="205.4" cy="438.1" rx="4.4" ry="3.1" fill="#cfe3b8" opacity=".5"/><ellipse cx="336.2" cy="389.5" rx="2.6" ry="2.1" fill="#cfe3b8" opacity=".5"/><ellipse cx="800.4" cy="374.7" rx="3.8" ry="2.6" fill="#cfe3b8" opacity=".5"/><ellipse cx="710.1" cy="502.7" rx="3.2" ry="1.7" fill="#cfe3b8" opacity=".5"/><ellipse cx="278.9" cy="413.5" rx="3.8" ry="1.2" fill="#cfe3b8" opacity=".5"/><ellipse cx="174.1" cy="498.4" rx="2.0" ry="1.1" fill="#cfe3b8" opacity=".5"/><ellipse cx="34.0" cy="454.9" rx="2.3" ry="3.2" fill="#cfe3b8" opacity=".5"/><ellipse cx="762.1" cy="549.4" rx="2.1" ry="1.2" fill="#cfe3b8" opacity=".5"/><ellipse cx="87.6" cy="443.2" rx="3.5" ry="2.0" fill="#cfe3b8" opacity=".5"/><ellipse cx="205.7" cy="425.5" rx="3.2" ry="2.5" fill="#cfe3b8" opacity=".5"/><ellipse cx="646.0" cy="518.8" rx="3.4" ry="1.3" fill="#cfe3b8" opacity=".5"/><ellipse cx="725.6" cy="398.8" rx="3.1" ry="1.8" fill="#cfe3b8" opacity=".5"/><ellipse cx="637.5" cy="378.2" rx="2.0" ry="1.5" fill="#cfe3b8" opacity=".5"/><ellipse cx="136.4" cy="526.9" rx="3.1" ry="1.7" fill="#cfe3b8" opacity=".5"/><ellipse cx="344.4" cy="550.4" rx="2.9" ry="1.5" fill="#cfe3b8" opacity=".5"/><ellipse cx="697.8" cy="476.8" rx="4.5" ry="1.2" fill="#cfe3b8" opacity=".5"/><ellipse cx="411.9" cy="512.7" rx="4.0" ry="3.0" fill="#cfe3b8" opacity=".5"/><ellipse cx="39.6" cy="398.7" rx="1.6" ry="1.4" fill="#cfe3b8" opacity=".5"/><ellipse cx="838.8" cy="461.6" rx="4.3" ry="1.8" fill="#cfe3b8" opacity=".5"/><ellipse cx="747.3" cy="432.5" rx="2.1" ry="2.7" fill="#cfe3b8" opacity=".5"/><ellipse cx="815.5" cy="358.0" rx="3.2" ry="2.4" fill="#cfe3b8" opacity=".5"/><ellipse cx="191.5" cy="415.0" rx="1.7" ry="1.4" fill="#cfe3b8" opacity=".5"/><ellipse cx="223.5" cy="465.1" rx="3.4" ry="1.4" fill="#cfe3b8" opacity=".5"/><ellipse cx="14.8" cy="406.0" rx="3.4" ry="1.4" fill="#cfe3b8" opacity=".5"/><ellipse cx="272.6" cy="379.1" rx="3.8" ry="2.2" fill="#cfe3b8" opacity=".5"/><ellipse cx="59.2" cy="357.0" rx="2.5" ry="2.2" fill="#cfe3b8" opacity=".5"/><ellipse cx="552.8" cy="354.8" rx="1.7" ry="2.5" fill="#cfe3b8" opacity=".5"/><ellipse cx="356.2" cy="396.5" rx="2.2" ry="3.1" fill="#cfe3b8" opacity=".5"/><ellipse cx="272.7" cy="457.9" rx="2.4" ry="1.9" fill="#cfe3b8" opacity=".5"/><ellipse cx="745.7" cy="551.3" rx="2.4" ry="1.4" fill="#cfe3b8" opacity=".5"/><ellipse cx="628.9" cy="379.2" rx="1.2" ry="3.0" fill="#cfe3b8" opacity=".5"/><ellipse cx="368.2" cy="513.0" rx="2.5" ry="2.9" fill="#cfe3b8" opacity=".5"/><ellipse cx="400.0" cy="370.3" rx="1.2" ry="2.2" fill="#cfe3b8" opacity=".5"/><ellipse cx="554.1" cy="532.4" rx="1.5" ry="2.4" fill="#cfe3b8" opacity=".5"/><ellipse cx="322.8" cy="444.5" rx="1.7" ry="1.6" fill="#cfe3b8" opacity=".5"/><ellipse cx="451.6" cy="535.8" rx="1.6" ry="2.1" fill="#cfe3b8" opacity=".5"/><ellipse cx="694.7" cy="544.8" rx="1.9" ry="1.3" fill="#cfe3b8" opacity=".5"/><ellipse cx="813.2" cy="546.7" rx="2.8" ry="1.1" fill="#cfe3b8" opacity=".5"/><ellipse cx="798.7" cy="419.2" rx="4.2" ry="2.4" fill="#cfe3b8" opacity=".5"/><ellipse cx="711.6" cy="369.8" rx="3.8" ry="1.5" fill="#cfe3b8" opacity=".5"/><ellipse cx="351.6" cy="518.7" rx="3.9" ry="1.4" fill="#cfe3b8" opacity=".5"/><ellipse cx="191.9" cy="421.7" rx="2.9" ry="1.8" fill="#cfe3b8" opacity=".5"/><ellipse cx="110.5" cy="388.6" rx="3.6" ry="3.0" fill="#cfe3b8" opacity=".5"/><ellipse cx="40.2" cy="457.0" rx="3.7" ry="1.1" fill="#cfe3b8" opacity=".5"/><ellipse cx="723.3" cy="360.5" rx="3.2" ry="2.2" fill="#cfe3b8" opacity=".5"/><ellipse cx="542.4" cy="401.4" rx="2.6" ry="2.3" fill="#cfe3b8" opacity=".5"/><ellipse cx="369.9" cy="478.0" rx="2.7" ry="2.0" fill="#cfe3b8" opacity=".5"/><ellipse cx="25.0" cy="469.3" rx="2.8" ry="1.5" fill="#cfe3b8" opacity=".5"/><ellipse cx="659.4" cy="504.3" rx="2.7" ry="1.4" fill="#cfe3b8" opacity=".5"/><ellipse cx="410.5" cy="358.2" rx="1.6" ry="1.9" fill="#cfe3b8" opacity=".5"/><ellipse cx="83.6" cy="430.9" rx="2.9" ry="1.1" fill="#cfe3b8" opacity=".5"/><ellipse cx="550.4" cy="352.8" rx="3.6" ry="2.7" fill="#cfe3b8" opacity=".5"/><ellipse cx="443.3" cy="346.8" rx="2.9" ry="1.8" fill="#cfe3b8" opacity=".5"/><ellipse cx="819.9" cy="364.6" rx="4.0" ry="3.2" fill="#cfe3b8" opacity=".5"/><ellipse cx="632.4" cy="511.9" rx="1.8" ry="3.2" fill="#cfe3b8" opacity=".5"/><ellipse cx="426.5" cy="542.6" rx="4.2" ry="1.4" fill="#cfe3b8" opacity=".5"/><ellipse cx="680.6" cy="536.9" rx="1.4" ry="1.8" fill="#cfe3b8" opacity=".5"/><ellipse cx="653.0" cy="369.5" rx="4.2" ry="1.6" fill="#cfe3b8" opacity=".5"/><ellipse cx="704.0" cy="366.2" rx="2.9" ry="3.0" fill="#cfe3b8" opacity=".5"/><ellipse cx="183.5" cy="392.0" rx="2.9" ry="1.7" fill="#cfe3b8" opacity=".5"/><ellipse cx="36.6" cy="374.5" rx="1.7" ry="3.1" fill="#cfe3b8" opacity=".5"/><ellipse cx="587.5" cy="529.3" rx="1.8" ry="2.7" fill="#cfe3b8" opacity=".5"/><ellipse cx="103.6" cy="450.2" rx="3.3" ry="1.8" fill="#cfe3b8" opacity=".5"/><ellipse cx="753.1" cy="455.5" rx="3.1" ry="2.9" fill="#cfe3b8" opacity=".5"/><ellipse cx="94.6" cy="550.5" rx="3.3" ry="1.9" fill="#cfe3b8" opacity=".5"/><ellipse cx="688.6" cy="392.5" rx="4.5" ry="2.3" fill="#cfe3b8" opacity=".5"/><ellipse cx="313.7" cy="500.9" rx="2.7" ry="1.4" fill="#cfe3b8" opacity=".5"/><ellipse cx="642.3" cy="345.5" rx="3.9" ry="1.6" fill="#cfe3b8" opacity=".5"/><ellipse cx="552.8" cy="548.5" rx="3.1" ry="2.5" fill="#cfe3b8" opacity=".5"/><ellipse cx="272.9" cy="335.4" rx="1.3" ry="1.3" fill="#cfe3b8" opacity=".5"/><ellipse cx="533.0" cy="428.8" rx="2.9" ry="3.0" fill="#cfe3b8" opacity=".5"/><ellipse cx="118.1" cy="384.3" rx="3.4" ry="1.0" fill="#cfe3b8" opacity=".5"/><ellipse cx="7.2" cy="412.0" rx="1.6" ry="1.8" fill="#cfe3b8" opacity=".5"/><ellipse cx="197.2" cy="461.6" rx="3.1" ry="1.4" fill="#cfe3b8" opacity=".5"/><ellipse cx="539.7" cy="438.1" rx="1.6" ry="3.1" fill="#cfe3b8" opacity=".5"/><ellipse cx="213.8" cy="367.4" rx="1.5" ry="2.4" fill="#cfe3b8" opacity=".5"/><ellipse cx="751.7" cy="504.7" rx="2.5" ry="1.6" fill="#cfe3b8" opacity=".5"/><ellipse cx="14.9" cy="475.0" rx="3.1" ry="1.8" fill="#cfe3b8" opacity=".5"/><ellipse cx="558.3" cy="431.3" rx="4.3" ry="2.6" fill="#cfe3b8" opacity=".5"/><ellipse cx="218.0" cy="531.1" rx="1.3" ry="2.2" fill="#cfe3b8" opacity=".5"/><ellipse cx="352.9" cy="386.6" rx="1.4" ry="2.7" fill="#cfe3b8" opacity=".5"/><ellipse cx="15.6" cy="454.6" rx="4.3" ry="1.3" fill="#cfe3b8" opacity=".5"/><ellipse cx="176.0" cy="467.0" rx="2.9" ry="2.4" fill="#cfe3b8" opacity=".5"/><ellipse cx="702.1" cy="372.9" rx="2.2" ry="1.7" fill="#cfe3b8" opacity=".5"/><ellipse cx="46.6" cy="528.0" rx="3.8" ry="2.6" fill="#cfe3b8" opacity=".5"/><ellipse cx="10.4" cy="518.2" rx="3.7" ry="2.0" fill="#cfe3b8" opacity=".5"/><ellipse cx="640.7" cy="433.2" rx="1.9" ry="1.2" fill="#cfe3b8" opacity=".5"/><ellipse cx="204.1" cy="343.4" rx="2.3" ry="2.6" fill="#cfe3b8" opacity=".5"/><ellipse cx="600.7" cy="518.4" rx="3.5" ry="1.6" fill="#cfe3b8" opacity=".5"/><ellipse cx="479.6" cy="429.6" rx="3.8" ry="2.2" fill="#cfe3b8" opacity=".5"/><ellipse cx="232.4" cy="474.3" rx="4.4" ry="1.5" fill="#cfe3b8" opacity=".5"/><ellipse cx="759.2" cy="338.3" rx="2.1" ry="1.5" fill="#cfe3b8" opacity=".5"/><ellipse cx="642.5" cy="540.0" rx="3.7" ry="1.7" fill="#cfe3b8" opacity=".5"/><ellipse cx="759.3" cy="406.3" rx="2.0" ry="3.0" fill="#cfe3b8" opacity=".5"/><ellipse cx="545.5" cy="485.3" rx="3.4" ry="3.2" fill="#cfe3b8" opacity=".5"/><ellipse cx="407.4" cy="517.2" rx="3.5" ry="2.9" fill="#cfe3b8" opacity=".5"/><ellipse cx="379.7" cy="492.2" rx="3.1" ry="1.7" fill="#cfe3b8" opacity=".5"/><ellipse cx="186.7" cy="470.1" rx="1.5" ry="3.0" fill="#cfe3b8" opacity=".5"/><ellipse cx="128.9" cy="340.8" rx="1.6" ry="3.0" fill="#cfe3b8" opacity=".5"/><ellipse cx="300.5" cy="365.8" rx="1.3" ry="1.1" fill="#cfe3b8" opacity=".5"/><ellipse cx="598.6" cy="472.6" rx="3.5" ry="2.6" fill="#cfe3b8" opacity=".5"/><ellipse cx="61.4" cy="463.1" rx="2.4" ry="2.8" fill="#cfe3b8" opacity=".5"/><ellipse cx="707.4" cy="528.4" rx="1.4" ry="2.9" fill="#cfe3b8" opacity=".5"/><ellipse cx="788.6" cy="539.9" rx="1.6" ry="1.5" fill="#cfe3b8" opacity=".5"/><ellipse cx="101.0" cy="342.5" rx="4.0" ry="2.8" fill="#cfe3b8" opacity=".5"/><ellipse cx="548.5" cy="514.0" rx="3.3" ry="1.6" fill="#cfe3b8" opacity=".5"/><ellipse cx="90.6" cy="356.2" rx="3.7" ry="1.5" fill="#cfe3b8" opacity=".5"/><ellipse cx="278.5" cy="427.0" rx="1.3" ry="1.6" fill="#cfe3b8" opacity=".5"/><ellipse cx="247.2" cy="490.3" rx="2.4" ry="1.7" fill="#cfe3b8" opacity=".5"/><ellipse cx="831.1" cy="444.3" rx="4.0" ry="2.4" fill="#cfe3b8" opacity=".5"/><ellipse cx="31.6" cy="424.6" rx="2.6" ry="2.7" fill="#cfe3b8" opacity=".5"/><ellipse cx="302.2" cy="487.9" rx="3.0" ry="1.5" fill="#cfe3b8" opacity=".5"/><ellipse cx="743.9" cy="354.7" rx="3.9" ry="1.4" fill="#cfe3b8" opacity=".5"/><ellipse cx="6.1" cy="378.8" rx="3.7" ry="3.2" fill="#cfe3b8" opacity=".5"/><ellipse cx="8.7" cy="441.5" rx="2.8" ry="2.8" fill="#cfe3b8" opacity=".5"/><ellipse cx="163.1" cy="442.3" rx="2.3" ry="2.8" fill="#cfe3b8" opacity=".5"/><ellipse cx="228.3" cy="539.8" rx="2.1" ry="1.5" fill="#cfe3b8" opacity=".5"/><ellipse cx="604.5" cy="443.1" rx="1.6" ry="2.4" fill="#cfe3b8" opacity=".5"/><ellipse cx="74.3" cy="506.0" rx="3.5" ry="2.7" fill="#cfe3b8" opacity=".5"/><ellipse cx="543.1" cy="412.2" rx="2.5" ry="1.9" fill="#cfe3b8" opacity=".5"/><ellipse cx="768.1" cy="353.7" rx="4.1" ry="1.1" fill="#cfe3b8" opacity=".5"/><ellipse cx="181.6" cy="392.1" rx="4.2" ry="2.1" fill="#cfe3b8" opacity=".5"/><ellipse cx="330.1" cy="526.8" rx="2.0" ry="2.0" fill="#cfe3b8" opacity=".5"/><ellipse cx="460.5" cy="498.7" rx="3.7" ry="2.4" fill="#cfe3b8" opacity=".5"/><ellipse cx="303.7" cy="405.9" rx="1.7" ry="2.9" fill="#cfe3b8" opacity=".5"/><ellipse cx="572.4" cy="496.0" rx="1.8" ry="2.0" fill="#cfe3b8" opacity=".5"/><ellipse cx="667.8" cy="460.7" rx="1.6" ry="2.0" fill="#cfe3b8" opacity=".5"/><ellipse cx="763.6" cy="386.6" rx="1.8" ry="1.7" fill="#cfe3b8" opacity=".5"/><ellipse cx="607.6" cy="518.1" rx="1.7" ry="1.3" fill="#cfe3b8" opacity=".5"/><ellipse cx="217.2" cy="405.9" rx="2.9" ry="1.4" fill="#cfe3b8" opacity=".5"/><ellipse cx="286.2" cy="376.1" rx="4.4" ry="2.6" fill="#cfe3b8" opacity=".5"/><ellipse cx="92.2" cy="543.8" rx="1.5" ry="1.8" fill="#cfe3b8" opacity=".5"/><ellipse cx="848.1" cy="507.5" rx="3.6" ry="2.0" fill="#cfe3b8" opacity=".5"/><ellipse cx="173.1" cy="473.4" rx="1.6" ry="1.5" fill="#cfe3b8" opacity=".5"/><ellipse cx="337.8" cy="342.4" rx="2.5" ry="2.7" fill="#cfe3b8" opacity=".5"/><ellipse cx="599.3" cy="443.6" rx="3.3" ry="2.0" fill="#cfe3b8" opacity=".5"/><ellipse cx="126.5" cy="466.0" rx="2.5" ry="2.6" fill="#cfe3b8" opacity=".5"/><ellipse cx="783.2" cy="428.3" rx="3.1" ry="2.6" fill="#cfe3b8" opacity=".5"/><ellipse cx="365.9" cy="384.6" rx="3.6" ry="2.9" fill="#cfe3b8" opacity=".5"/><ellipse cx="668.4" cy="486.9" rx="4.0" ry="2.5" fill="#cfe3b8" opacity=".5"/><ellipse cx="554.8" cy="433.5" rx="2.2" ry="2.4" fill="#cfe3b8" opacity=".5"/><ellipse cx="88.9" cy="426.0" rx="3.8" ry="2.6" fill="#cfe3b8" opacity=".5"/><ellipse cx="544.6" cy="389.3" rx="2.6" ry="2.0" fill="#cfe3b8" opacity=".5"/><ellipse cx="537.7" cy="423.8" rx="3.4" ry="3.0" fill="#cfe3b8" opacity=".5"/><ellipse cx="161.9" cy="477.0" rx="3.8" ry="1.9" fill="#cfe3b8" opacity=".5"/><ellipse cx="424.8" cy="546.5" rx="1.3" ry="2.2" fill="#cfe3b8" opacity=".5"/><ellipse cx="142.8" cy="504.6" rx="4.3" ry="2.1" fill="#cfe3b8" opacity=".5"/><ellipse cx="91.6" cy="459.7" rx="3.0" ry="2.6" fill="#cfe3b8" opacity=".5"/><ellipse cx="443.9" cy="473.7" rx="3.9" ry="2.1" fill="#cfe3b8" opacity=".5"/><ellipse cx="356.7" cy="540.7" rx="1.9" ry="2.5" fill="#cfe3b8" opacity=".5"/><ellipse cx="341.4" cy="500.5" rx="1.6" ry="3.2" fill="#cfe3b8" opacity=".5"/><ellipse cx="309.6" cy="347.3" rx="2.1" ry="1.9" fill="#cfe3b8" opacity=".5"/><ellipse cx="16.4" cy="425.8" rx="2.6" ry="2.5" fill="#cfe3b8" opacity=".5"/><ellipse cx="306.8" cy="392.5" rx="1.9" ry="2.6" fill="#cfe3b8" opacity=".5"/><ellipse cx="810.5" cy="449.4" rx="1.9" ry="2.8" fill="#cfe3b8" opacity=".5"/><ellipse cx="340.9" cy="381.0" rx="1.6" ry="2.7" fill="#cfe3b8" opacity=".5"/><ellipse cx="698.8" cy="472.6" rx="2.7" ry="2.2" fill="#cfe3b8" opacity=".5"/><ellipse cx="198.7" cy="544.2" rx="2.4" ry="2.4" fill="#cfe3b8" opacity=".5"/><ellipse cx="706.7" cy="512.1" rx="2.7" ry="1.6" fill="#cfe3b8" opacity=".5"/><ellipse cx="474.9" cy="362.2" rx="4.0" ry="1.8" fill="#cfe3b8" opacity=".5"/><ellipse cx="734.0" cy="393.0" rx="2.4" ry="1.6" fill="#cfe3b8" opacity=".5"/><ellipse cx="370.2" cy="375.3" rx="1.2" ry="2.6" fill="#cfe3b8" opacity=".5"/><ellipse cx="246.0" cy="388.2" rx="2.2" ry="2.1" fill="#cfe3b8" opacity=".5"/><ellipse cx="372.2" cy="473.3" rx="3.4" ry="1.8" fill="#cfe3b8" opacity=".5"/><ellipse cx="800.9" cy="520.4" rx="1.4" ry="2.8" fill="#cfe3b8" opacity=".5"/><ellipse cx="781.3" cy="505.1" rx="1.7" ry="2.8" fill="#cfe3b8" opacity=".5"/><ellipse cx="547.6" cy="338.3" rx="1.2" ry="3.1" fill="#cfe3b8" opacity=".5"/><ellipse cx="567.2" cy="389.3" rx="1.5" ry="1.3" fill="#cfe3b8" opacity=".5"/><ellipse cx="205.2" cy="503.5" rx="2.3" ry="1.3" fill="#cfe3b8" opacity=".5"/><ellipse cx="779.8" cy="506.8" rx="1.8" ry="3.0" fill="#cfe3b8" opacity=".5"/><ellipse cx="526.4" cy="504.5" rx="3.4" ry="3.0" fill="#cfe3b8" opacity=".5"/><ellipse cx="680.4" cy="517.0" rx="1.9" ry="2.5" fill="#cfe3b8" opacity=".5"/><ellipse cx="459.9" cy="496.0" rx="2.6" ry="2.9" fill="#cfe3b8" opacity=".5"/><ellipse cx="480.7" cy="392.4" rx="2.0" ry="1.3" fill="#cfe3b8" opacity=".5"/><ellipse cx="427.6" cy="347.7" rx="2.7" ry="1.3" fill="#cfe3b8" opacity=".5"/><ellipse cx="426.1" cy="443.1" rx="3.0" ry="2.9" fill="#cfe3b8" opacity=".5"/><ellipse cx="10.7" cy="517.4" rx="2.7" ry="2.2" fill="#cfe3b8" opacity=".5"/><ellipse cx="575.2" cy="517.4" rx="2.4" ry="1.9" fill="#cfe3b8" opacity=".5"/><ellipse cx="828.2" cy="351.4" rx="3.3" ry="2.4" fill="#cfe3b8" opacity=".5"/><ellipse cx="29.4" cy="467.3" rx="3.5" ry="3.0" fill="#cfe3b8" opacity=".5"/><ellipse cx="288.2" cy="548.0" rx="2.9" ry="2.1" fill="#cfe3b8" opacity=".5"/><ellipse cx="774.2" cy="342.4" rx="3.6" ry="2.4" fill="#cfe3b8" opacity=".5"/><ellipse cx="295.2" cy="522.0" rx="2.4" ry="2.0" fill="#cfe3b8" opacity=".5"/><ellipse cx="455.4" cy="502.2" rx="1.9" ry="2.0" fill="#cfe3b8" opacity=".5"/><ellipse cx="367.0" cy="455.2" rx="3.9" ry="1.6" fill="#cfe3b8" opacity=".5"/><ellipse cx="714.4" cy="422.6" rx="2.9" ry="1.6" fill="#cfe3b8" opacity=".5"/><ellipse cx="439.0" cy="546.6" rx="3.4" ry="2.7" fill="#cfe3b8" opacity=".5"/><ellipse cx="288.6" cy="403.8" rx="2.2" ry="2.3" fill="#cfe3b8" opacity=".5"/><ellipse cx="549.0" cy="505.2" rx="1.3" ry="2.6" fill="#cfe3b8" opacity=".5"/><ellipse cx="764.0" cy="453.4" rx="1.4" ry="1.7" fill="#cfe3b8" opacity=".5"/><ellipse cx="10.3" cy="376.2" rx="4.2" ry="2.3" fill="#cfe3b8" opacity=".5"/><ellipse cx="568.9" cy="506.2" rx="4.2" ry="2.3" fill="#cfe3b8" opacity=".5"/><ellipse cx="533.5" cy="471.0" rx="3.5" ry="2.3" fill="#cfe3b8" opacity=".5"/><ellipse cx="588.6" cy="381.1" rx="3.4" ry="2.0" fill="#cfe3b8" opacity=".5"/><ellipse cx="658.6" cy="357.0" rx="1.8" ry="1.1" fill="#cfe3b8" opacity=".5"/><ellipse cx="668.8" cy="533.4" rx="3.4" ry="1.8" fill="#cfe3b8" opacity=".5"/><ellipse cx="710.0" cy="505.7" rx="3.1" ry="1.6" fill="#cfe3b8" opacity=".5"/><ellipse cx="263.8" cy="426.5" rx="2.3" ry="1.9" fill="#cfe3b8" opacity=".5"/><ellipse cx="555.0" cy="537.6" rx="1.4" ry="2.2" fill="#cfe3b8" opacity=".5"/><ellipse cx="38.7" cy="360.8" rx="3.9" ry="2.3" fill="#cfe3b8" opacity=".5"/><ellipse cx="792.3" cy="431.9" rx="1.2" ry="1.9" fill="#cfe3b8" opacity=".5"/><ellipse cx="512.3" cy="538.5" rx="4.4" ry="2.0" fill="#cfe3b8" opacity=".5"/><ellipse cx="358.4" cy="357.1" rx="3.3" ry="1.5" fill="#cfe3b8" opacity=".5"/><ellipse cx="135.1" cy="338.4" rx="1.2" ry="2.5" fill="#cfe3b8" opacity=".5"/><ellipse cx="109.3" cy="544.7" rx="1.5" ry="2.9" fill="#cfe3b8" opacity=".5"/><ellipse cx="115.5" cy="338.9" rx="3.6" ry="1.5" fill="#cfe3b8" opacity=".5"/><ellipse cx="633.7" cy="375.7" rx="1.4" ry="2.7" fill="#cfe3b8" opacity=".5"/><ellipse cx="616.5" cy="520.6" rx="3.6" ry="1.2" fill="#cfe3b8" opacity=".5"/><ellipse cx="543.7" cy="488.9" rx="2.7" ry="3.1" fill="#cfe3b8" opacity=".5"/><ellipse cx="222.7" cy="544.3" rx="3.6" ry="1.0" fill="#cfe3b8" opacity=".5"/><ellipse cx="17.6" cy="476.2" rx="3.9" ry="1.2" fill="#cfe3b8" opacity=".5"/><ellipse cx="271.6" cy="493.3" rx="1.7" ry="2.9" fill="#cfe3b8" opacity=".5"/><ellipse cx="421.8" cy="348.0" rx="2.4" ry="2.3" fill="#cfe3b8" opacity=".5"/><ellipse cx="381.0" cy="481.9" rx="1.7" ry="2.8" fill="#cfe3b8" opacity=".5"/><ellipse cx="316.3" cy="474.9" rx="3.3" ry="1.9" fill="#cfe3b8" opacity=".5"/><ellipse cx="335.6" cy="505.6" rx="4.3" ry="2.7" fill="#cfe3b8" opacity=".5"/><ellipse cx="490.8" cy="398.4" rx="1.4" ry="3.1" fill="#cfe3b8" opacity=".5"/><ellipse cx="607.7" cy="514.5" rx="2.3" ry="2.3" fill="#cfe3b8" opacity=".5"/><ellipse cx="842.7" cy="515.4" rx="3.2" ry="1.7" fill="#cfe3b8" opacity=".5"/><ellipse cx="372.3" cy="527.7" rx="2.4" ry="2.5" fill="#cfe3b8" opacity=".5"/><ellipse cx="520.7" cy="529.5" rx="3.9" ry="1.6" fill="#cfe3b8" opacity=".5"/><ellipse cx="6.4" cy="392.1" rx="2.6" ry="2.3" fill="#cfe3b8" opacity=".5"/><ellipse cx="704.3" cy="527.6" rx="1.3" ry="2.8" fill="#cfe3b8" opacity=".5"/><ellipse cx="700.7" cy="523.2" rx="3.1" ry="1.6" fill="#cfe3b8" opacity=".5"/><ellipse cx="734.5" cy="510.1" rx="3.5" ry="3.0" fill="#cfe3b8" opacity=".5"/><ellipse cx="302.3" cy="353.5" rx="3.0" ry="2.8" fill="#cfe3b8" opacity=".5"/><ellipse cx="176.8" cy="497.8" rx="4.3" ry="1.5" fill="#cfe3b8" opacity=".5"/><ellipse cx="525.1" cy="482.1" rx="2.7" ry="1.5" fill="#cfe3b8" opacity=".5"/><ellipse cx="223.3" cy="498.0" rx="3.8" ry="2.0" fill="#cfe3b8" opacity=".5"/><ellipse cx="80.2" cy="510.0" rx="3.7" ry="1.5" fill="#cfe3b8" opacity=".5"/><ellipse cx="501.7" cy="529.6" rx="4.1" ry="2.1" fill="#cfe3b8" opacity=".5"/><ellipse cx="413.4" cy="462.9" rx="1.8" ry="1.4" fill="#cfe3b8" opacity=".5"/><ellipse cx="159.9" cy="487.1" rx="2.4" ry="2.2" fill="#cfe3b8" opacity=".5"/><ellipse cx="349.9" cy="447.2" rx="1.7" ry="1.1" fill="#cfe3b8" opacity=".5"/><ellipse cx="859.6" cy="416.2" rx="1.6" ry="2.4" fill="#cfe3b8" opacity=".5"/><ellipse cx="679.8" cy="368.9" rx="3.2" ry="1.8" fill="#cfe3b8" opacity=".5"/><ellipse cx="450.2" cy="339.5" rx="1.3" ry="3.2" fill="#cfe3b8" opacity=".5"/><ellipse cx="747.2" cy="440.5" rx="3.1" ry="1.6" fill="#cfe3b8" opacity=".5"/><ellipse cx="672.8" cy="427.4" rx="4.3" ry="2.7" fill="#cfe3b8" opacity=".5"/><ellipse cx="706.7" cy="544.1" rx="2.0" ry="1.1" fill="#cfe3b8" opacity=".5"/><ellipse cx="177.2" cy="374.2" rx="1.5" ry="1.1" fill="#cfe3b8" opacity=".5"/><ellipse cx="482.7" cy="523.9" rx="2.7" ry="3.1" fill="#cfe3b8" opacity=".5"/><ellipse cx="784.8" cy="348.9" rx="3.2" ry="1.9" fill="#cfe3b8" opacity=".5"/><ellipse cx="107.8" cy="543.2" rx="2.0" ry="2.2" fill="#cfe3b8" opacity=".5"/><ellipse cx="554.0" cy="542.5" rx="3.4" ry="1.9" fill="#cfe3b8" opacity=".5"/><ellipse cx="389.2" cy="369.7" rx="4.4" ry="3.2" fill="#cfe3b8" opacity=".5"/><ellipse cx="195.0" cy="343.4" rx="2.0" ry="1.8" fill="#cfe3b8" opacity=".5"/><ellipse cx="778.7" cy="531.3" rx="4.0" ry="1.1" fill="#cfe3b8" opacity=".5"/><ellipse cx="678.9" cy="489.0" rx="3.3" ry="3.2" fill="#cfe3b8" opacity=".5"/><ellipse cx="52.8" cy="366.4" rx="3.7" ry="3.1" fill="#cfe3b8" opacity=".5"/><ellipse cx="585.1" cy="399.8" rx="3.2" ry="2.7" fill="#cfe3b8" opacity=".5"/><ellipse cx="95.3" cy="405.3" rx="2.0" ry="1.3" fill="#cfe3b8" opacity=".5"/><ellipse cx="417.5" cy="371.6" rx="2.0" ry="1.3" fill="#cfe3b8" opacity=".5"/><ellipse cx="585.7" cy="337.7" rx="3.6" ry="1.4" fill="#cfe3b8" opacity=".5"/><ellipse cx="35.9" cy="536.3" rx="1.9" ry="3.1" fill="#cfe3b8" opacity=".5"/><ellipse cx="747.8" cy="527.8" rx="1.7" ry="2.0" fill="#cfe3b8" opacity=".5"/><ellipse cx="88.1" cy="536.5" rx="4.0" ry="2.4" fill="#cfe3b8" opacity=".5"/><ellipse cx="392.7" cy="408.7" rx="3.9" ry="2.1" fill="#cfe3b8" opacity=".5"/><ellipse cx="543.4" cy="366.0" rx="1.9" ry="1.1" fill="#cfe3b8" opacity=".5"/><ellipse cx="616.7" cy="455.1" rx="1.7" ry="2.9" fill="#cfe3b8" opacity=".5"/><ellipse cx="233.3" cy="424.4" rx="1.7" ry="1.6" fill="#cfe3b8" opacity=".5"/><ellipse cx="724.5" cy="407.6" rx="1.8" ry="2.1" fill="#cfe3b8" opacity=".5"/><ellipse cx="277.6" cy="531.0" rx="1.6" ry="3.2" fill="#cfe3b8" opacity=".5"/><ellipse cx="53.7" cy="529.2" rx="3.4" ry="1.5" fill="#cfe3b8" opacity=".5"/><ellipse cx="414.2" cy="397.1" rx="2.1" ry="1.4" fill="#cfe3b8" opacity=".5"/><ellipse cx="317.2" cy="550.1" rx="4.5" ry="3.0" fill="#cfe3b8" opacity=".5"/><ellipse cx="88.6" cy="397.8" rx="4.2" ry="1.1" fill="#cfe3b8" opacity=".5"/><ellipse cx="627.6" cy="398.7" rx="4.4" ry="1.0" fill="#cfe3b8" opacity=".5"/><ellipse cx="696.6" cy="409.0" rx="1.7" ry="1.0" fill="#cfe3b8" opacity=".5"/><ellipse cx="718.2" cy="449.3" rx="1.8" ry="2.0" fill="#cfe3b8" opacity=".5"/><ellipse cx="786.6" cy="382.4" rx="3.1" ry="1.3" fill="#cfe3b8" opacity=".5"/><ellipse cx="159.4" cy="502.2" rx="3.5" ry="1.4" fill="#cfe3b8" opacity=".5"/><ellipse cx="72.9" cy="354.0" rx="3.2" ry="2.1" fill="#cfe3b8" opacity=".5"/><ellipse cx="239.7" cy="379.7" rx="3.2" ry="2.6" fill="#cfe3b8" opacity=".5"/><ellipse cx="700.5" cy="461.5" rx="1.9" ry="1.1" fill="#cfe3b8" opacity=".5"/><ellipse cx="632.9" cy="423.6" rx="3.6" ry="1.1" fill="#cfe3b8" opacity=".5"/><ellipse cx="699.7" cy="407.7" rx="4.0" ry="2.9" fill="#cfe3b8" opacity=".5"/><ellipse cx="427.5" cy="338.4" rx="4.2" ry="2.0" fill="#cfe3b8" opacity=".5"/><ellipse cx="752.3" cy="392.8" rx="1.8" ry="2.8" fill="#cfe3b8" opacity=".5"/><ellipse cx="319.6" cy="370.5" rx="2.4" ry="2.3" fill="#cfe3b8" opacity=".5"/><ellipse cx="9.0" cy="447.8" rx="2.7" ry="2.1" fill="#cfe3b8" opacity=".5"/><ellipse cx="108.5" cy="490.1" rx="3.9" ry="2.9" fill="#cfe3b8" opacity=".5"/><ellipse cx="280.1" cy="489.3" rx="2.5" ry="2.7" fill="#cfe3b8" opacity=".5"/><ellipse cx="57.5" cy="524.4" rx="4.3" ry="2.1" fill="#cfe3b8" opacity=".5"/><ellipse cx="444.9" cy="450.1" rx="3.0" ry="1.0" fill="#cfe3b8" opacity=".5"/><ellipse cx="834.1" cy="383.5" rx="1.8" ry="1.2" fill="#cfe3b8" opacity=".5"/><ellipse cx="219.6" cy="512.3" rx="1.3" ry="1.2" fill="#cfe3b8" opacity=".5"/><ellipse cx="604.0" cy="377.3" rx="1.3" ry="2.3" fill="#cfe3b8" opacity=".5"/><ellipse cx="499.0" cy="448.5" rx="3.5" ry="1.2" fill="#cfe3b8" opacity=".5"/><ellipse cx="750.2" cy="490.6" rx="1.3" ry="1.3" fill="#cfe3b8" opacity=".5"/><ellipse cx="428.0" cy="443.7" rx="2.1" ry="1.3" fill="#cfe3b8" opacity=".5"/><ellipse cx="352.6" cy="364.7" rx="3.2" ry="2.9" fill="#cfe3b8" opacity=".5"/><ellipse cx="131.2" cy="459.3" rx="3.7" ry="1.4" fill="#cfe3b8" opacity=".5"/><ellipse cx="712.9" cy="538.5" rx="2.5" ry="1.9" fill="#cfe3b8" opacity=".5"/><ellipse cx="724.6" cy="449.1" rx="2.5" ry="3.1" fill="#cfe3b8" opacity=".5"/><ellipse cx="670.8" cy="408.5" rx="2.0" ry="1.7" fill="#cfe3b8" opacity=".5"/><ellipse cx="378.3" cy="547.9" rx="3.9" ry="3.0" fill="#cfe3b8" opacity=".5"/><ellipse cx="703.5" cy="518.9" rx="1.4" ry="2.1" fill="#cfe3b8" opacity=".5"/><ellipse cx="825.9" cy="537.8" rx="2.0" ry="1.9" fill="#cfe3b8" opacity=".5"/><ellipse cx="547.2" cy="414.1" rx="3.0" ry="1.2" fill="#cfe3b8" opacity=".5"/><ellipse cx="376.1" cy="444.5" rx="1.3" ry="1.3" fill="#cfe3b8" opacity=".5"/><ellipse cx="836.0" cy="503.5" rx="4.3" ry="2.4" fill="#cfe3b8" opacity=".5"/><ellipse cx="698.5" cy="526.9" rx="4.1" ry="1.1" fill="#cfe3b8" opacity=".5"/><ellipse cx="554.8" cy="392.7" rx="3.4" ry="1.6" fill="#cfe3b8" opacity=".5"/><ellipse cx="469.7" cy="535.6" rx="3.3" ry="1.6" fill="#cfe3b8" opacity=".5"/><ellipse cx="450.9" cy="429.1" rx="4.3" ry="1.6" fill="#cfe3b8" opacity=".5"/><ellipse cx="266.7" cy="475.5" rx="1.6" ry="2.3" fill="#cfe3b8" opacity=".5"/><ellipse cx="824.4" cy="446.5" rx="2.1" ry="2.0" fill="#cfe3b8" opacity=".5"/><ellipse cx="462.5" cy="367.2" rx="1.6" ry="1.3" fill="#cfe3b8" opacity=".5"/><ellipse cx="256.6" cy="423.2" rx="2.2" ry="1.5" fill="#cfe3b8" opacity=".5"/><ellipse cx="80.3" cy="453.6" rx="4.0" ry="2.3" fill="#cfe3b8" opacity=".5"/><ellipse cx="493.6" cy="476.1" rx="1.9" ry="2.6" fill="#cfe3b8" opacity=".5"/><ellipse cx="400.0" cy="453.9" rx="3.2" ry="2.0" fill="#cfe3b8" opacity=".5"/><ellipse cx="271.1" cy="387.6" rx="1.9" ry="2.1" fill="#cfe3b8" opacity=".5"/><ellipse cx="333.4" cy="462.1" rx="1.2" ry="1.8" fill="#cfe3b8" opacity=".5"/><ellipse cx="743.6" cy="386.8" rx="3.0" ry="2.1" fill="#cfe3b8" opacity=".5"/><ellipse cx="249.1" cy="549.3" rx="2.2" ry="2.7" fill="#cfe3b8" opacity=".5"/><ellipse cx="140.9" cy="349.5" rx="4.1" ry="2.0" fill="#cfe3b8" opacity=".5"/><ellipse cx="58.1" cy="419.2" rx="2.7" ry="2.6" fill="#cfe3b8" opacity=".5"/><ellipse cx="98.6" cy="383.9" rx="4.4" ry="2.6" fill="#cfe3b8" opacity=".5"/><ellipse cx="137.4" cy="408.1" rx="2.4" ry="2.5" fill="#cfe3b8" opacity=".5"/><ellipse cx="533.2" cy="519.4" rx="3.9" ry="2.1" fill="#cfe3b8" opacity=".5"/><ellipse cx="638.1" cy="496.3" rx="3.7" ry="2.0" fill="#cfe3b8" opacity=".5"/><path d="M677.7 488.8 L685.3 483.1 L696.8 472.4 L701.6 459.8 L709.8 453.9" stroke="#cdcdcd" stroke-width="0.9" fill="none" stroke-opacity="0.85" stroke-linejoin="round" stroke-linecap="round" /><path d="M733.4 395.6 L721.7 387.3 L706.4 377.6 L693.7 373.3" stroke="#cdcdcd" stroke-width="0.9" fill="none" stroke-opacity="0.85" stroke-linejoin="round" stroke-linecap="round" /><path d="M480.9 418.4 L477.2 430.1 L470.6 448.1 L466.9 460.9 L467.8 480.4 L473.2 501.3 L474.5 512.6" stroke="#cdcdcd" stroke-width="0.9" fill="none" stroke-opacity="0.85" stroke-linejoin="round" stroke-linecap="round" /><path d="M284.2 546.0 L287.9 534.9 L296.5 526.4 L305.7 518.1" stroke="#cdcdcd" stroke-width="0.9" fill="none" stroke-opacity="0.85" stroke-linejoin="round" stroke-linecap="round" /><path d="M536.3 429.9 L540.7 417.6 L546.4 406.0 L561.0 396.5 L569.1 391.6 L579.5 382.9 L592.5 373.5" stroke="#cdcdcd" stroke-width="0.9" fill="none" stroke-opacity="0.85" stroke-linejoin="round" stroke-linecap="round" /><path d="M759.0 544.3 L739.0 539.5 L722.3 533.5 L714.9 528.0 L703.2 522.0 L690.9 522.5 L675.2 529.6" stroke="#cdcdcd" stroke-width="0.9" fill="none" stroke-opacity="0.85" stroke-linejoin="round" stroke-linecap="round" /><path d="M257.7 409.5 L271.6 410.3 L282.9 406.2 L297.1 401.2 L305.1 394.3 L319.1 385.6 L335.4 370.9 L342.6 366.3" stroke="#cdcdcd" stroke-width="0.9" fill="none" stroke-opacity="0.85" stroke-linejoin="round" stroke-linecap="round" /><path d="M357.6 505.9 L360.5 517.8 L357.7 533.8 L353.8 543.8 L348.1 558.5 L346.6 575.5 L343.7 597.3 L340.8 610.7" stroke="#cdcdcd" stroke-width="0.9" fill="none" stroke-opacity="0.85" stroke-linejoin="round" stroke-linecap="round" /><path d="M109.1 369.0 L104.7 361.1 L105.2 346.2 L105.1 332.2" stroke="#cdcdcd" stroke-width="0.9" fill="none" stroke-opacity="0.85" stroke-linejoin="round" stroke-linecap="round" /><path d="M690.9 476.1 L680.3 461.4 L672.9 454.2 L664.6 449.8 L655.6 436.4 L645.6 426.2 L638.6 420.8 L631.7 406.3" stroke="#cdcdcd" stroke-width="0.9" fill="none" stroke-opacity="0.85" stroke-linejoin="round" stroke-linecap="round" /><path d="M827.4 430.4 L818.1 426.2 L809.0 421.0 L788.9 422.3 L775.2 423.9" stroke="#cdcdcd" stroke-width="0.9" fill="none" stroke-opacity="0.85" stroke-linejoin="round" stroke-linecap="round" /><path d="M220.9 527.4 L233.1 521.7 L244.1 519.8 L262.7 511.8" stroke="#cdcdcd" stroke-width="0.9" fill="none" stroke-opacity="0.85" stroke-linejoin="round" stroke-linecap="round" /><path d="M420.1 507.0 L425.8 519.1 L443.2 529.6 L455.2 534.9 L474.9 539.3" stroke="#cdcdcd" stroke-width="0.9" fill="none" stroke-opacity="0.85" stroke-linejoin="round" stroke-linecap="round" /><path d="M292.8 476.3 L305.6 478.2 L316.2 476.5 L326.5 471.9 L336.2 457.6 L340.2 448.2 L345.8 440.8" stroke="#cdcdcd" stroke-width="0.9" fill="none" stroke-opacity="0.85" stroke-linejoin="round" stroke-linecap="round" /><path d="M236.1 516.2 L249.9 529.4 L261.8 535.2 L275.3 536.7 L290.9 540.9 L305.6 541.3 L324.5 534.8" stroke="#cdcdcd" stroke-width="0.9" fill="none" stroke-opacity="0.85" stroke-linejoin="round" stroke-linecap="round" /><path d="M583.7 539.4 L598.2 546.7 L609.1 550.2 L619.1 554.8 L625.2 562.4 L634.9 574.6 L650.2 585.6 L665.4 593.6" stroke="#cdcdcd" stroke-width="0.9" fill="none" stroke-opacity="0.85" stroke-linejoin="round" stroke-linecap="round" /><path d="M491.5 402.4 L474.6 410.8 L467.0 418.3 L458.5 421.0" stroke="#cdcdcd" stroke-width="0.9" fill="none" stroke-opacity="0.85" stroke-linejoin="round" stroke-linecap="round" /><path d="M788.2 509.7 L782.6 498.7 L775.6 491.9 L769.5 481.6 L756.9 465.1" stroke="#cdcdcd" stroke-width="0.9" fill="none" stroke-opacity="0.85" stroke-linejoin="round" stroke-linecap="round" /><path d="M669.2 526.6 L679.0 523.0 L695.8 513.7 L715.5 508.0 L727.4 494.6" stroke="#cdcdcd" stroke-width="0.9" fill="none" stroke-opacity="0.85" stroke-linejoin="round" stroke-linecap="round" /><path d="M401.4 552.0 L396.3 560.1 L380.4 569.1 L372.1 571.2" stroke="#cdcdcd" stroke-width="0.9" fill="none" stroke-opacity="0.85" stroke-linejoin="round" stroke-linecap="round" /><path d="M39.3 370.2 L51.6 383.7 L62.1 396.8 L64.5 412.6 L71.3 425.9 L80.4 444.8" stroke="#cdcdcd" stroke-width="0.9" fill="none" stroke-opacity="0.85" stroke-linejoin="round" stroke-linecap="round" /><path d="M579.3 459.8 L598.2 459.8 L606.5 457.6 L622.8 460.3" stroke="#cdcdcd" stroke-width="0.9" fill="none" stroke-opacity="0.85" stroke-linejoin="round" stroke-linecap="round" /><path d="M45.6 388.0 L65.1 395.2 L72.4 400.8 L81.0 411.2 L88.5 429.3 L94.1 436.7" stroke="#cdcdcd" stroke-width="0.9" fill="none" stroke-opacity="0.85" stroke-linejoin="round" stroke-linecap="round" /><path d="M816.0 427.0 L835.4 424.0 L849.8 424.0 L865.1 415.0 L877.4 406.2 L887.1 405.2 L895.6 407.0 L912.9 415.4" stroke="#cdcdcd" stroke-width="0.9" fill="none" stroke-opacity="0.85" stroke-linejoin="round" stroke-linecap="round" /><path d="M228.8 453.6 L240.2 452.0 L250.4 443.9 L258.2 436.3 L263.5 428.0" stroke="#cdcdcd" stroke-width="0.9" fill="none" stroke-opacity="0.85" stroke-linejoin="round" stroke-linecap="round" /><path d="M610.9 480.5 L621.8 494.3 L637.0 501.9 L644.6 508.2 L654.1 521.4" stroke="#cdcdcd" stroke-width="0.9" fill="none" stroke-opacity="0.85" stroke-linejoin="round" stroke-linecap="round" /><path d="M211.3 471.6 L216.5 480.6 L221.6 496.2 L228.2 513.7 L227.9 523.3 L230.7 536.0 L235.5 543.4" stroke="#cdcdcd" stroke-width="0.9" fill="none" stroke-opacity="0.85" stroke-linejoin="round" stroke-linecap="round" /><path d="M245.7 377.8 L248.3 367.8 L251.2 352.1 L250.2 336.4 L241.8 324.5 L241.2 309.7 L244.5 297.5" stroke="#cdcdcd" stroke-width="0.9" fill="none" stroke-opacity="0.85" stroke-linejoin="round" stroke-linecap="round" /><path d="M638.3 392.4 L626.5 377.5 L616.4 369.3 L604.6 367.0 L587.4 361.1 L572.9 351.9 L554.5 350.8" stroke="#cdcdcd" stroke-width="0.9" fill="none" stroke-opacity="0.85" stroke-linejoin="round" stroke-linecap="round" /><path d="M26.7 420.8 L41.2 429.4 L53.5 446.5 L69.6 456.4 L80.3 471.4 L88.2 478.5" stroke="#cdcdcd" stroke-width="0.9" fill="none" stroke-opacity="0.85" stroke-linejoin="round" stroke-linecap="round" /><path d="M712.3 404.5 L693.6 410.7 L686.4 415.8 L677.5 432.9 L659.2 445.0 L652.5 450.6 L645.5 462.6 L629.6 477.8" stroke="#cdcdcd" stroke-width="0.9" fill="none" stroke-opacity="0.85" stroke-linejoin="round" stroke-linecap="round" /><path d="M521.4 470.9 L534.0 477.6 L538.6 485.6 L551.0 492.4 L569.0 494.7" stroke="#cdcdcd" stroke-width="0.9" fill="none" stroke-opacity="0.85" stroke-linejoin="round" stroke-linecap="round" /><path d="M7.4 517.5 L13.9 507.4 L24.4 496.4 L32.4 486.5 L42.1 472.1 L59.4 460.8 L66.1 450.7 L74.0 436.9" stroke="#cdcdcd" stroke-width="0.9" fill="none" stroke-opacity="0.85" stroke-linejoin="round" stroke-linecap="round" /><path d="M303.3 377.4 L315.2 384.8 L329.1 394.2 L342.5 396.6 L351.2 399.4 L365.2 410.9" stroke="#cdcdcd" stroke-width="0.9" fill="none" stroke-opacity="0.85" stroke-linejoin="round" stroke-linecap="round" /><path d="M289.1 477.9 L280.6 465.9 L275.4 454.9 L263.4 438.4 L253.4 434.5 L241.6 426.6 L224.4 425.0" stroke="#cdcdcd" stroke-width="0.9" fill="none" stroke-opacity="0.85" stroke-linejoin="round" stroke-linecap="round" /><path d="M323.8 461.0 L314.3 471.6 L309.5 481.6 L300.3 487.4 L289.6 490.3 L272.7 487.9 L255.8 491.9 L244.6 491.6" stroke="#cdcdcd" stroke-width="0.9" fill="none" stroke-opacity="0.85" stroke-linejoin="round" stroke-linecap="round" /><path d="M397.6 452.4 L400.1 436.7 L409.7 422.0 L417.7 416.2 L429.9 407.3 L450.6 402.6 L472.0 401.1 L486.4 400.4" stroke="#cdcdcd" stroke-width="0.9" fill="none" stroke-opacity="0.85" stroke-linejoin="round" stroke-linecap="round" /><path d="M592.9 453.1 L611.6 450.7 L627.5 440.7 L632.7 430.7 L635.4 422.9" stroke="#cdcdcd" stroke-width="0.9" fill="none" stroke-opacity="0.85" stroke-linejoin="round" stroke-linecap="round" /><path d="M514.3 381.3 L509.8 401.2 L502.5 420.0 L493.5 438.8 L485.4 445.3" stroke="#cdcdcd" stroke-width="0.9" fill="none" stroke-opacity="0.85" stroke-linejoin="round" stroke-linecap="round" /><path d="M643.8 409.1 L648.3 400.4 L654.1 383.1 L667.9 371.3" stroke="#cdcdcd" stroke-width="0.9" fill="none" stroke-opacity="0.85" stroke-linejoin="round" stroke-linecap="round" /><path d="M42.3 466.0 L57.3 472.7 L77.8 469.8 L89.5 464.2 L97.6 462.4 L110.8 467.5 L122.0 477.3 L133.3 479.7" stroke="#cdcdcd" stroke-width="0.9" fill="none" stroke-opacity="0.85" stroke-linejoin="round" stroke-linecap="round" /><path d="M133.8 537.0 L148.8 530.9 L165.7 516.9 L176.7 512.6 L184.2 509.0 L198.9 511.2 L207.2 512.3" stroke="#cdcdcd" stroke-width="0.9" fill="none" stroke-opacity="0.85" stroke-linejoin="round" stroke-linecap="round" /><path d="M722.4 351.2 L710.6 342.6 L691.2 338.3 L671.1 336.5 L662.2 334.5 L651.2 334.3 L636.9 326.6 L626.5 327.2" stroke="#cdcdcd" stroke-width="0.9" fill="none" stroke-opacity="0.85" stroke-linejoin="round" stroke-linecap="round" /><path d="M314.4 436.5 L307.8 426.0 L297.6 415.3 L287.4 410.0 L277.6 396.7 L269.2 380.5 L258.7 372.3" stroke="#cdcdcd" stroke-width="0.9" fill="none" stroke-opacity="0.85" stroke-linejoin="round" stroke-linecap="round" /><path d="M59.4 550.1 L45.5 566.4 L37.4 568.7 L19.0 572.5 L0.7 567.9 L-14.8 561.3 L-26.4 558.5 L-43.2 547.2" stroke="#cdcdcd" stroke-width="0.9" fill="none" stroke-opacity="0.85" stroke-linejoin="round" stroke-linecap="round" /><path d="M809.4 482.8 L800.5 495.1 L791.4 504.2 L781.1 513.2 L777.1 525.3 L774.7 547.0" stroke="#cdcdcd" stroke-width="0.9" fill="none" stroke-opacity="0.85" stroke-linejoin="round" stroke-linecap="round" /><path d="M417.6 414.7 L412.3 423.3 L408.2 443.3 L402.8 455.9 L397.6 474.0" stroke="#cdcdcd" stroke-width="0.9" fill="none" stroke-opacity="0.85" stroke-linejoin="round" stroke-linecap="round" /><path d="M801.6 462.3 L814.7 471.5 L829.8 486.8 L840.0 489.8 L851.3 501.4 L862.3 508.3" stroke="#cdcdcd" stroke-width="0.9" fill="none" stroke-opacity="0.85" stroke-linejoin="round" stroke-linecap="round" /><path d="M406.0 545.6 L406.4 533.1 L399.1 513.9 L393.6 496.1" stroke="#cdcdcd" stroke-width="0.9" fill="none" stroke-opacity="0.85" stroke-linejoin="round" stroke-linecap="round" /><path d="M541.9 386.4 L552.7 386.5 L572.6 389.1 L582.9 392.3" stroke="#cdcdcd" stroke-width="0.9" fill="none" stroke-opacity="0.85" stroke-linejoin="round" stroke-linecap="round" /><path d="M633.9 544.0 L614.7 541.6 L597.0 537.8 L586.1 542.2" stroke="#cdcdcd" stroke-width="0.9" fill="none" stroke-opacity="0.85" stroke-linejoin="round" stroke-linecap="round" /><path d="M555.6 338.3 L554.2 350.8 L547.4 366.4 L542.2 383.1" stroke="#cdcdcd" stroke-width="0.9" fill="none" stroke-opacity="0.85" stroke-linejoin="round" stroke-linecap="round" /><path d="M294.5 347.5 L286.0 361.7 L269.3 375.8 L255.0 391.3" stroke="#cdcdcd" stroke-width="0.9" fill="none" stroke-opacity="0.85" stroke-linejoin="round" stroke-linecap="round" /><path d="M753.4 340.6 L755.3 357.1 L753.3 369.5 L756.6 379.2 L769.6 392.7 L788.0 398.8" stroke="#cdcdcd" stroke-width="0.9" fill="none" stroke-opacity="0.85" stroke-linejoin="round" stroke-linecap="round" /><path d="M367.7 451.9 L346.2 448.9 L335.3 446.3 L317.2 439.2 L309.3 436.4 L294.4 427.8 L279.5 418.0 L269.1 410.1" stroke="#cdcdcd" stroke-width="0.9" fill="none" stroke-opacity="0.85" stroke-linejoin="round" stroke-linecap="round" /><path d="M458.9 394.4 L459.1 411.6 L455.0 424.0 L446.2 430.9 L437.5 434.2 L431.6 442.1 L429.8 457.0 L427.8 467.3" stroke="#cdcdcd" stroke-width="0.9" fill="none" stroke-opacity="0.85" stroke-linejoin="round" stroke-linecap="round" /><path d="M810.4 414.3 L814.1 434.0 L811.8 449.2 L812.4 467.1 L814.4 487.1" stroke="#cdcdcd" stroke-width="0.9" fill="none" stroke-opacity="0.85" stroke-linejoin="round" stroke-linecap="round" /><path d="M187.7 533.0 L197.5 525.2 L206.8 523.4 L215.7 524.3 L228.8 527.9 L235.6 533.6 L245.3 543.3" stroke="#cdcdcd" stroke-width="0.9" fill="none" stroke-opacity="0.85" stroke-linejoin="round" stroke-linecap="round" /><path d="M792.7 540.1 L784.6 538.1 L774.6 532.8 L762.6 528.9 L751.0 526.3" stroke="#cdcdcd" stroke-width="0.9" fill="none" stroke-opacity="0.85" stroke-linejoin="round" stroke-linecap="round" /><path d="M758.7 443.2 L779.5 440.2 L800.5 444.0 L812.3 440.8 L818.2 435.3" stroke="#cdcdcd" stroke-width="0.9" fill="none" stroke-opacity="0.85" stroke-linejoin="round" stroke-linecap="round" /><path d="M752.4 389.2 L744.8 401.4 L732.5 417.6 L726.4 437.0 L723.9 455.8 L718.2 464.7 L699.7 476.4 L693.9 482.4" stroke="#cdcdcd" stroke-width="0.9" fill="none" stroke-opacity="0.85" stroke-linejoin="round" stroke-linecap="round" /><path d="M100.6 546.4 L117.7 540.0 L124.6 532.3 L132.2 526.8 L146.4 511.6 L163.7 500.9" stroke="#cdcdcd" stroke-width="0.9" fill="none" stroke-opacity="0.85" stroke-linejoin="round" stroke-linecap="round" /><path d="M844.6 342.1 L853.7 354.1 L865.3 362.0 L873.5 363.0" stroke="#cdcdcd" stroke-width="0.9" fill="none" stroke-opacity="0.85" stroke-linejoin="round" stroke-linecap="round" /><path d="M854.1 403.7 L875.2 399.1 L883.1 397.6 L896.6 389.9" stroke="#cdcdcd" stroke-width="0.9" fill="none" stroke-opacity="0.85" stroke-linejoin="round" stroke-linecap="round" /><path d="M547.7 453.4 L562.2 450.2 L574.6 453.8 L596.1 452.6 L612.9 459.7 L623.3 461.1 L632.2 459.7 L643.7 450.0" stroke="#cdcdcd" stroke-width="0.9" fill="none" stroke-opacity="0.85" stroke-linejoin="round" stroke-linecap="round" /><path d="M354.8 455.8 L350.7 463.3 L345.5 474.1 L342.3 487.5" stroke="#cdcdcd" stroke-width="0.9" fill="none" stroke-opacity="0.85" stroke-linejoin="round" stroke-linecap="round" /><path d="M856.3 496.7 L857.7 510.5 L851.7 522.5 L847.2 535.5 L849.4 557.4 L860.0 570.1 L862.1 581.5" stroke="#cdcdcd" stroke-width="0.9" fill="none" stroke-opacity="0.85" stroke-linejoin="round" stroke-linecap="round" /><path d="M528.5 416.8 L527.3 425.9 L524.9 434.1 L517.8 445.8 L507.7 460.2" stroke="#cdcdcd" stroke-width="0.9" fill="none" stroke-opacity="0.85" stroke-linejoin="round" stroke-linecap="round" /><path d="M384.2 480.0 L372.4 494.2 L358.8 500.8 L338.1 508.2 L324.9 518.5 L312.5 523.4 L299.1 524.9 L282.5 526.3" stroke="#cdcdcd" stroke-width="0.9" fill="none" stroke-opacity="0.85" stroke-linejoin="round" stroke-linecap="round" /><path d="M585.4 404.9 L574.2 387.2 L571.3 375.9 L574.6 356.1 L574.3 339.9 L575.7 318.0 L567.6 301.2 L561.3 292.4" stroke="#cdcdcd" stroke-width="0.9" fill="none" stroke-opacity="0.85" stroke-linejoin="round" stroke-linecap="round" /><path d="M149.9 414.4 L148.6 400.0 L150.1 380.5 L160.6 363.3 L160.6 349.9" stroke="#cdcdcd" stroke-width="0.9" fill="none" stroke-opacity="0.85" stroke-linejoin="round" stroke-linecap="round" /><path d="M718.1 512.5 L725.1 523.7 L736.5 536.7 L744.2 546.2 L749.9 556.6" stroke="#cdcdcd" stroke-width="0.9" fill="none" stroke-opacity="0.85" stroke-linejoin="round" stroke-linecap="round" /><path d="M254.0 431.8 L259.8 440.5 L264.1 447.3 L276.8 455.1 L289.0 466.5 L302.7 480.0 L316.7 487.3" stroke="#cdcdcd" stroke-width="0.9" fill="none" stroke-opacity="0.85" stroke-linejoin="round" stroke-linecap="round" /><path d="M5.7 391.3 L-2.3 382.6 L-11.6 376.0 L-16.4 368.1 L-24.0 349.5 L-33.4 339.3" stroke="#cdcdcd" stroke-width="0.9" fill="none" stroke-opacity="0.85" stroke-linejoin="round" stroke-linecap="round" /><path d="M684.0 469.1 L672.7 476.0 L664.2 492.4 L652.1 499.6" stroke="#cdcdcd" stroke-width="0.9" fill="none" stroke-opacity="0.85" stroke-linejoin="round" stroke-linecap="round" /><path d="M525.6 390.7 L533.8 405.2 L532.7 425.1 L531.3 433.9 L535.3 453.5 L544.6 464.3 L554.8 473.6 L560.0 489.8" stroke="#cdcdcd" stroke-width="0.9" fill="none" stroke-opacity="0.85" stroke-linejoin="round" stroke-linecap="round" /><path d="M683.4 358.4 L672.1 350.0 L668.7 340.1 L658.4 331.2 L640.5 326.2 L629.8 329.7 L617.7 339.4" stroke="#cdcdcd" stroke-width="0.9" fill="none" stroke-opacity="0.85" stroke-linejoin="round" stroke-linecap="round" /><path d="M798.4 398.8 L791.3 405.3 L787.0 413.3 L779.8 419.4 L772.9 436.6 L769.0 444.5 L757.8 458.5" stroke="#cdcdcd" stroke-width="0.9" fill="none" stroke-opacity="0.85" stroke-linejoin="round" stroke-linecap="round" /><path d="M418.8 346.9 L419.2 336.9 L418.6 328.3 L419.6 315.8 L413.4 295.0 L403.7 282.7 L398.2 275.4" stroke="#cdcdcd" stroke-width="0.9" fill="none" stroke-opacity="0.85" stroke-linejoin="round" stroke-linecap="round" /><path d="M333.9 479.1 L329.5 492.3 L332.2 504.2 L327.9 523.0 L320.9 532.2 L318.4 540.6 L314.1 553.1" stroke="#cdcdcd" stroke-width="0.9" fill="none" stroke-opacity="0.85" stroke-linejoin="round" stroke-linecap="round" /><path d="M402.8 441.1 L396.4 430.1 L386.6 415.1 L379.8 398.2 L372.4 393.2 L364.2 375.4" stroke="#cdcdcd" stroke-width="0.9" fill="none" stroke-opacity="0.85" stroke-linejoin="round" stroke-linecap="round" /><path d="M35.3 382.7 L16.2 385.2 L1.8 385.4 L-10.6 378.6 L-15.7 371.4" stroke="#cdcdcd" stroke-width="0.9" fill="none" stroke-opacity="0.85" stroke-linejoin="round" stroke-linecap="round" /><path d="M376.7 473.7 L388.3 483.2 L406.3 485.0 L415.8 488.9" stroke="#cdcdcd" stroke-width="0.9" fill="none" stroke-opacity="0.85" stroke-linejoin="round" stroke-linecap="round" /><path d="M194.2 491.3 L194.6 481.1 L201.0 464.3 L206.5 450.8 L206.7 441.6" stroke="#cdcdcd" stroke-width="0.9" fill="none" stroke-opacity="0.85" stroke-linejoin="round" stroke-linecap="round" /><path d="M48.1 383.6 L55.0 376.1 L58.8 358.8 L52.4 340.2 L46.2 330.8 L40.4 319.7 L36.4 310.4" stroke="#cdcdcd" stroke-width="0.9" fill="none" stroke-opacity="0.85" stroke-linejoin="round" stroke-linecap="round" /><path d="M786.5 405.4 L802.0 397.7 L817.3 382.4 L822.9 373.8 L828.4 357.6" stroke="#cdcdcd" stroke-width="0.9" fill="none" stroke-opacity="0.85" stroke-linejoin="round" stroke-linecap="round" /><path d="M599.9 378.0 L611.5 391.2 L629.6 398.6 L650.5 397.2 L668.7 407.9" stroke="#cdcdcd" stroke-width="0.9" fill="none" stroke-opacity="0.85" stroke-linejoin="round" stroke-linecap="round" /><path d="M456.1 398.1 L437.7 407.8 L429.8 416.8 L422.3 431.1 L414.5 438.7 L401.6 452.3 L383.5 462.1" stroke="#cdcdcd" stroke-width="0.9" fill="none" stroke-opacity="0.85" stroke-linejoin="round" stroke-linecap="round" /><path d="M501.0 400.1 L494.8 388.9 L495.3 371.7 L489.0 360.6" stroke="#cdcdcd" stroke-width="0.9" fill="none" stroke-opacity="0.85" stroke-linejoin="round" stroke-linecap="round" /><path d="M390.3 388.7 L380.6 371.6 L378.0 353.7 L374.3 335.6 L368.0 327.5" stroke="#cdcdcd" stroke-width="0.9" fill="none" stroke-opacity="0.85" stroke-linejoin="round" stroke-linecap="round" /><path d="M342.0 342.8 L358.6 338.8 L371.2 328.8 L379.9 318.8 L388.0 312.5 L398.5 294.1 L404.7 275.3 L414.8 264.6" stroke="#cdcdcd" stroke-width="0.9" fill="none" stroke-opacity="0.85" stroke-linejoin="round" stroke-linecap="round" /><path d="M132.7 355.4 L137.3 344.5 L142.6 333.2 L144.8 317.4" stroke="#cdcdcd" stroke-width="0.9" fill="none" stroke-opacity="0.85" stroke-linejoin="round" stroke-linecap="round" /><path d="M41.0 390.6 L50.9 386.0 L58.1 377.3 L71.7 370.9 L80.0 371.2 L92.5 379.2" stroke="#cdcdcd" stroke-width="0.9" fill="none" stroke-opacity="0.85" stroke-linejoin="round" stroke-linecap="round" /><path d="M682.9 458.8 L674.9 452.1 L665.0 432.6 L656.1 418.4 L642.4 410.2" stroke="#cdcdcd" stroke-width="0.9" fill="none" stroke-opacity="0.85" stroke-linejoin="round" stroke-linecap="round" /><path d="M108.5 479.1 L110.2 498.0 L108.7 506.7 L111.0 522.9 L107.4 530.7" stroke="#cdcdcd" stroke-width="0.9" fill="none" stroke-opacity="0.85" stroke-linejoin="round" stroke-linecap="round" /><path d="M534.8 485.1 L533.1 466.6 L533.3 456.0 L529.1 435.4 L530.3 427.0 L535.0 418.2" stroke="#cdcdcd" stroke-width="0.9" fill="none" stroke-opacity="0.85" stroke-linejoin="round" stroke-linecap="round" /><path d="M443.3 371.3 L442.1 350.4 L445.1 332.7 L442.3 325.1 L443.2 316.7" stroke="#cdcdcd" stroke-width="0.9" fill="none" stroke-opacity="0.85" stroke-linejoin="round" stroke-linecap="round" /><path d="M455.4 406.6 L464.3 412.7 L478.9 426.2 L483.2 434.4 L485.9 447.0 L498.5 464.5 L506.0 481.3 L520.7 494.2" stroke="#cdcdcd" stroke-width="0.9" fill="none" stroke-opacity="0.85" stroke-linejoin="round" stroke-linecap="round" /><path d="M808.1 531.3 L802.5 519.2 L796.9 498.8 L792.3 480.9 L790.0 463.9 L790.1 454.9 L796.9 436.9 L809.1 421.3" stroke="#cdcdcd" stroke-width="0.9" fill="none" stroke-opacity="0.85" stroke-linejoin="round" stroke-linecap="round" /><path d="M210.8 462.5 L192.1 452.8 L187.0 445.8 L181.3 433.5 L176.1 415.4 L170.2 403.5 L171.0 392.3" stroke="#cdcdcd" stroke-width="0.9" fill="none" stroke-opacity="0.85" stroke-linejoin="round" stroke-linecap="round" /><path d="M580.8 506.8 L579.3 498.9 L577.6 490.9 L565.5 475.7 L554.0 463.9 L544.7 455.3 L532.8 450.2" stroke="#cdcdcd" stroke-width="0.9" fill="none" stroke-opacity="0.85" stroke-linejoin="round" stroke-linecap="round" /><path d="M728.8 469.4 L720.7 476.3 L707.5 479.7 L696.3 482.0" stroke="#cdcdcd" stroke-width="0.9" fill="none" stroke-opacity="0.85" stroke-linejoin="round" stroke-linecap="round" /><path d="M190.4 471.1 L182.7 481.1 L180.2 491.2 L179.1 510.6 L168.4 529.2" stroke="#cdcdcd" stroke-width="0.9" fill="none" stroke-opacity="0.85" stroke-linejoin="round" stroke-linecap="round" /><path d="M269.4 404.1 L277.4 386.2 L277.7 370.8 L271.9 362.1 L271.2 347.7 L274.8 336.8 L276.1 327.5 L280.3 307.9" stroke="#cdcdcd" stroke-width="0.9" fill="none" stroke-opacity="0.85" stroke-linejoin="round" stroke-linecap="round" /><path d="M445.4 416.7 L454.2 414.5 L468.3 413.1 L480.1 418.8 L493.6 428.8 L507.1 436.1" stroke="#cdcdcd" stroke-width="0.9" fill="none" stroke-opacity="0.85" stroke-linejoin="round" stroke-linecap="round" /><path d="M584.8 531.9 L576.7 530.1 L560.7 517.4 L547.7 514.6 L532.6 514.9 L517.6 521.8" stroke="#cdcdcd" stroke-width="0.9" fill="none" stroke-opacity="0.85" stroke-linejoin="round" stroke-linecap="round" /><path d="M398.3 540.8 L379.7 532.2 L363.4 532.1 L354.8 531.2" stroke="#cdcdcd" stroke-width="0.9" fill="none" stroke-opacity="0.85" stroke-linejoin="round" stroke-linecap="round" /><path d="M341.1 497.2 L335.4 487.4 L333.7 479.2 L331.7 465.6 L319.0 448.5 L312.2 435.3" stroke="#cdcdcd" stroke-width="0.9" fill="none" stroke-opacity="0.85" stroke-linejoin="round" stroke-linecap="round" /><path d="M840.2 413.2 L848.7 399.5 L864.2 388.3 L871.0 381.1 L885.3 366.7 L892.1 349.7" stroke="#cdcdcd" stroke-width="0.9" fill="none" stroke-opacity="0.85" stroke-linejoin="round" stroke-linecap="round" /><path d="M151.3 402.7 L163.0 417.5 L176.1 429.4 L194.5 438.5 L209.6 445.4 L217.6 456.5" stroke="#cdcdcd" stroke-width="0.9" fill="none" stroke-opacity="0.85" stroke-linejoin="round" stroke-linecap="round" /><path d="M589.1 413.5 L589.0 421.1 L582.4 428.1 L571.5 430.5 L563.4 428.0 L552.0 432.0 L542.3 435.9 L530.3 436.9" stroke="#a9d2de" stroke-width="1" fill="none" stroke-opacity="0.9" stroke-linejoin="round" stroke-linecap="round" /><path d="M241.0 413.7 L253.8 414.2 L261.5 408.5 L262.0 398.3 L265.4 390.5 L270.3 383.1 L283.3 381.6 L289.1 385.2 L298.3 393.8" stroke="#a9d2de" stroke-width="1" fill="none" stroke-opacity="0.9" stroke-linejoin="round" stroke-linecap="round" /><path d="M720.1 489.5 L733.6 487.0 L745.1 487.7 L752.9 492.6 L755.5 504.2 L760.0 512.2" stroke="#a9d2de" stroke-width="1" fill="none" stroke-opacity="0.9" stroke-linejoin="round" stroke-linecap="round" /><path d="M695.5 410.9 L699.0 420.5 L699.5 433.7 L705.1 440.3 L714.4 441.1 L727.2 442.3" stroke="#a9d2de" stroke-width="1" fill="none" stroke-opacity="0.9" stroke-linejoin="round" stroke-linecap="round" /><path d="M577.3 460.4 L565.3 462.7 L552.5 461.1 L545.8 465.0 L538.0 464.3 L531.1 468.8 L528.9 482.4 L521.7 487.8 L515.9 497.4" stroke="#a9d2de" stroke-width="1" fill="none" stroke-opacity="0.9" stroke-linejoin="round" stroke-linecap="round" /><path d="M755.3 418.4 L756.8 407.7 L762.2 401.5 L763.8 393.9 L758.1 384.0 L762.2 372.3 L763.1 360.7 L755.0 351.0 L749.9 347.7 L744.9 342.6" stroke="#a9d2de" stroke-width="1" fill="none" stroke-opacity="0.9" stroke-linejoin="round" stroke-linecap="round" /><path d="M240.7 347.8 L234.6 348.9 L224.9 349.9 L216.6 350.9 L205.7 342.6 L199.8 337.5 L191.1 328.4 L178.5 322.7 L168.6 316.5" stroke="#a9d2de" stroke-width="1" fill="none" stroke-opacity="0.9" stroke-linejoin="round" stroke-linecap="round" /><path d="M196.1 372.5 L197.7 366.2 L203.1 355.8 L208.5 348.3 L215.1 339.8 L217.1 327.1 L227.9 320.9" stroke="#a9d2de" stroke-width="1" fill="none" stroke-opacity="0.9" stroke-linejoin="round" stroke-linecap="round" /><path d="M828.9 406.5 L839.3 408.3 L853.1 408.9 L861.2 416.2 L872.0 418.1" stroke="#a9d2de" stroke-width="1" fill="none" stroke-opacity="0.9" stroke-linejoin="round" stroke-linecap="round" /><path d="M100.9 370.9 L105.6 362.0 L108.4 354.9 L113.5 349.3 L116.8 339.4" stroke="#a9d2de" stroke-width="1" fill="none" stroke-opacity="0.9" stroke-linejoin="round" stroke-linecap="round" /><path d="M606.0 546.1 L613.9 537.5 L619.8 534.7 L623.3 529.7 L634.5 526.1" stroke="#a9d2de" stroke-width="1" fill="none" stroke-opacity="0.9" stroke-linejoin="round" stroke-linecap="round" /><path d="M545.1 392.2 L539.1 398.3 L535.7 404.2 L526.3 411.0 L521.8 415.3 L510.5 419.8" stroke="#a9d2de" stroke-width="1" fill="none" stroke-opacity="0.9" stroke-linejoin="round" stroke-linecap="round" /><path d="M298.9 521.2 L294.7 526.4 L291.3 534.2 L279.0 540.3 L268.9 538.6 L260.1 541.1 L250.5 546.8 L243.1 545.0" stroke="#a9d2de" stroke-width="1" fill="none" stroke-opacity="0.9" stroke-linejoin="round" stroke-linecap="round" /><path d="M243.5 511.8 L237.2 508.2 L234.1 499.2 L228.4 495.4 L222.8 486.8 L210.5 484.9 L206.8 479.3 L206.3 471.7 L207.2 458.4 L212.9 451.8" stroke="#a9d2de" stroke-width="1" fill="none" stroke-opacity="0.9" stroke-linejoin="round" stroke-linecap="round" /><path d="M760 462 L787 465 L797 482 L796 501 L792 520 L790 536 L770 540 L752 552 L735 552 L738 530 L742 506 L755 495 L762 480Z" fill="#d6e7c0" opacity=".9"/><g fill="#c3dcab" stroke="#c3dcab" stroke-width="5" stroke-linejoin="round" opacity=".75"><path d="M767 468 L776 466 L784 472 L783 480 L775 485 L769 480Z"/><path d="M785 486 L793 488 L793 498 L786 497Z"/><path d="M746 510 L757 508 L765 514 L764 526 L752 527 L747 520Z"/><path d="M772 519 L781 516 L789 522 L788 532 L776 533 L773 527Z"/></g><path d="M652 442 L683 442 L683 459 L655 458Z" fill="#dcdcaa" opacity=".8"/><path d="M700 488 L725 485 L730 500 L705 500Z" fill="#e6dcb0" opacity=".7"/><ellipse cx="150" cy="498" rx="24" ry="22" fill="#dedcd6" opacity=".75"/><ellipse cx="395" cy="510" rx="14" ry="10" fill="#dedcd6" opacity=".75"/><ellipse cx="185" cy="365" rx="9" ry="8" fill="#dedcd6" opacity=".75"/><ellipse cx="548" cy="356" rx="12" ry="6" fill="#dedcd6" opacity=".75"/><ellipse cx="797" cy="390" rx="10" ry="8" fill="#dedcd6" opacity=".75"/><ellipse cx="730" cy="545" rx="14" ry="8" fill="#dedcd6" opacity=".75"/><ellipse cx="695" cy="410" rx="9" ry="5" fill="#dedcd6" opacity=".75"/><ellipse cx="515" cy="435" rx="10" ry="5" fill="#dedcd6" opacity=".75"/><ellipse cx="105" cy="432" rx="8" ry="5" fill="#dedcd6" opacity=".75"/><ellipse cx="66" cy="485" rx="6" ry="4" fill="#dedcd6" opacity=".75"/><ellipse cx="490" cy="338" rx="8" ry="3" fill="#dedcd6" opacity=".75"/><path d="M138 335 Q150 341 162 345 L176 348 Q197 347 215 335Z" fill="#a2cbd9" stroke="#b8dcae" stroke-width="1.2"/><path d="M5 335 L14 335 Q10 339 5 339Z" fill="#a9cfdb"/><path d="M264 335 L292 335 L292 350 Q278 346 264 335Z" fill="#aed2d6" stroke="#b8dcae" stroke-width="1.2"/><path d="M846 420 L862 420 L862 440 L852 438Z" fill="#a9cfdb"/><path d="M835 444 L845 443 L844 456 L836 455Z" fill="#a9cfdb"/><path d="M840 460 L855 458 L856 468 L842 468Z" fill="#b3d5df"/><path d="M813 492 L822 491 L822 500 L814 500Z" fill="#b3d5df"/><path d="M610 400 Q640 395 660 402 Q640 408 612 405Z" fill="#b8d9e2"/><path d="M5 455 L40 470 L80 478 L120 470 L150 455 L180 448 L250 447" stroke="#a6cfdc" stroke-width="1" fill="none" stroke-opacity="0.8" stroke-linejoin="round" stroke-linecap="round" /><path d="M212 452 L240 458 L300 470 L330 480" stroke="#a6cfdc" stroke-width="1" fill="none" stroke-opacity="0.8" stroke-linejoin="round" stroke-linecap="round" /><path d="M480 470 L520 460 L575 455 L620 450 L660 445" stroke="#a6cfdc" stroke-width="1" fill="none" stroke-opacity="0.7" stroke-linejoin="round" stroke-linecap="round" /><path d="M230 514 L260 520 L290 532" stroke="#a6cfdc" stroke-width="1" fill="none" stroke-opacity="0.7" stroke-linejoin="round" stroke-linecap="round" /><path d="M50 335 L70 380 L95 430 L110 445" stroke="#c9c9c9" stroke-width="1.1" fill="none" stroke-opacity="0.9" stroke-linejoin="round" stroke-linecap="round" /><path d="M120 345 L140 380 L150 420" stroke="#c9c9c9" stroke-width="1.1" fill="none" stroke-opacity="0.9" stroke-linejoin="round" stroke-linecap="round" /><path d="M200 420 L230 450 L260 470" stroke="#c9c9c9" stroke-width="1.1" fill="none" stroke-opacity="0.9" stroke-linejoin="round" stroke-linecap="round" /><path d="M5 505 L40 520 L90 530" stroke="#c9c9c9" stroke-width="1.1" fill="none" stroke-opacity="0.9" stroke-linejoin="round" stroke-linecap="round" /><path d="M420 455 L470 470 L520 480 L575 480" stroke="#c9c9c9" stroke-width="1.1" fill="none" stroke-opacity="0.9" stroke-linejoin="round" stroke-linecap="round" /><path d="M600 440 L640 430 L700 425 L760 430" stroke="#c9c9c9" stroke-width="1.1" fill="none" stroke-opacity="0.9" stroke-linejoin="round" stroke-linecap="round" /><path d="M640 470 L700 478 L760 470 L800 460" stroke="#c9c9c9" stroke-width="1.1" fill="none" stroke-opacity="0.9" stroke-linejoin="round" stroke-linecap="round" /><path d="M820 470 L810 520 L800 552" stroke="#c9c9c9" stroke-width="1.1" fill="none" stroke-opacity="0.9" stroke-linejoin="round" stroke-linecap="round" /><path d="M480 500 L540 505 L600 500" stroke="#c9c9c9" stroke-width="1.1" fill="none" stroke-opacity="0.9" stroke-linejoin="round" stroke-linecap="round" /><path d="M560 335 L600 360 L650 380" stroke="#c9c9c9" stroke-width="1.1" fill="none" stroke-opacity="0.9" stroke-linejoin="round" stroke-linecap="round" /><path d="M740 340 L760 360 L780 375" stroke="#c9c9c9" stroke-width="1.1" fill="none" stroke-opacity="0.9" stroke-linejoin="round" stroke-linecap="round" /><path d="M87.6 341.0 L65.7 358.9 L45.8 366.9" stroke="#f5c78c" stroke-width="1.7" fill="none" stroke-opacity="1" stroke-linejoin="round" stroke-linecap="round" /><path d="M45.8 366.9 L55.8 376.8 L62.7 381.8 L59.8 388.8 L57.8 396.8 L53.8 402.7" stroke="#f5c78c" stroke-width="1.7" fill="none" stroke-opacity="1" stroke-linejoin="round" stroke-linecap="round" /><path d="M5.0 414.7 L31.9 416.7" stroke="#f5c78c" stroke-width="1.7" fill="none" stroke-opacity="1" stroke-linejoin="round" stroke-linecap="round" /><path d="M79.7 416.7 L99.6 428.6 L105.6 445.0" stroke="#f5c78c" stroke-width="1.7" fill="none" stroke-opacity="1" stroke-linejoin="round" stroke-linecap="round" /><path d="M59.8 418.7 L55.8 430.6 L51.8 445.0" stroke="#f5c78c" stroke-width="1.7" fill="none" stroke-opacity="1" stroke-linejoin="round" stroke-linecap="round" /><path d="M187 368.5 L195 361 L208 358 L215 360 L248 360 L254 367.5 L254 380" stroke="#f5c78c" stroke-width="1.7" fill="none" stroke-opacity="1" stroke-linejoin="round" stroke-linecap="round" /><path d="M188.4 402.3 L218.7 393.9 L249.0 382.1 L259.1 378.7" stroke="#f5c78c" stroke-width="1.7" fill="none" stroke-opacity="1" stroke-linejoin="round" stroke-linecap="round" /><path d="M249.0 358.6 L255.7 378.7 L259.1 395.6" stroke="#f5c78c" stroke-width="1.7" fill="none" stroke-opacity="1" stroke-linejoin="round" stroke-linecap="round" /><path d="M160.9 480.6 L181.2 472.5 L211.6 466.4 L250.0 462.3" stroke="#f5c78c" stroke-width="1.7" fill="none" stroke-opacity="1" stroke-linejoin="round" stroke-linecap="round" /><path d="M100.0 515.1 L130.4 509.0 L146.7 507.0" stroke="#f5c78c" stroke-width="1.7" fill="none" stroke-opacity="1" stroke-linejoin="round" stroke-linecap="round" /><path d="M108.1 440.0 L114.2 466.4 L126.4 480.6" stroke="#f5c78c" stroke-width="1.7" fill="none" stroke-opacity="1" stroke-linejoin="round" stroke-linecap="round" /><path d="M136.5 504.9 L130.4 531.3 L126.4 552.0" stroke="#f5c78c" stroke-width="1.7" fill="none" stroke-opacity="1" stroke-linejoin="round" stroke-linecap="round" /><path d="M53.8 442.0 L50.5 462.2 L43.7 485.7 L26.9 519.4 L13.5 539.6" stroke="#f5c78c" stroke-width="1.7" fill="none" stroke-opacity="1" stroke-linejoin="round" stroke-linecap="round" /><path d="M0.0 526.1 L50.5 531.2 L77.4 534.5 L87.5 542.9" stroke="#f5c78c" stroke-width="1.7" fill="none" stroke-opacity="1" stroke-linejoin="round" stroke-linecap="round" /><path d="M218.7 470.6 L255.7 462.2 L290.0 455.5" stroke="#f5c78c" stroke-width="1.7" fill="none" stroke-opacity="1" stroke-linejoin="round" stroke-linecap="round" /><path d="M416.2 455.5 L436.4 475.6 L463.3 485.7 L520.5 492.5 L547.4 485.7" stroke="#f5c78c" stroke-width="1.7" fill="none" stroke-opacity="1" stroke-linejoin="round" stroke-linecap="round" /><path d="M285.0 532.8 L318.6 519.4 L369.1 509.3 L396.0 500.9 L419.6 502.6 L453.2 492.5" stroke="#f5c78c" stroke-width="1.7" fill="none" stroke-opacity="1" stroke-linejoin="round" stroke-linecap="round" /><path d="M520.5 475.6 L513.8 509.3 L503.7 552.0" stroke="#f5c78c" stroke-width="1.7" fill="none" stroke-opacity="1" stroke-linejoin="round" stroke-linecap="round" /><path d="M290.0 442.0 L290.0 475.6 L286.7 509.3 L285.0 552.0" stroke="#f5c78c" stroke-width="1.7" fill="none" stroke-opacity="1" stroke-linejoin="round" stroke-linecap="round" /><path d="M480.2 335.0 L478.5 355.2 L473.4 368.6" stroke="#f5c78c" stroke-width="1.7" fill="none" stroke-opacity="1" stroke-linejoin="round" stroke-linecap="round" /><path d="M550.8 360.2 L554.2 388.8 L560.9 409.0 L564.3 445.0" stroke="#f5c78c" stroke-width="1.7" fill="none" stroke-opacity="1" stroke-linejoin="round" stroke-linecap="round" /><path d="M473.4 365.3 L513.8 361.9 L575.0 358.6" stroke="#f5c78c" stroke-width="1.7" fill="none" stroke-opacity="1" stroke-linejoin="round" stroke-linecap="round" /><path d="M710.0 345.1 L699.9 378.7 L696.5 395.6 L698.2 419.1 L699.9 445.0" stroke="#f5c78c" stroke-width="1.7" fill="none" stroke-opacity="1" stroke-linejoin="round" stroke-linecap="round" /><path d="M807.5 335.0 L810.9 375.4 L804.2 402.3 L800.8 445.0" stroke="#f5c78c" stroke-width="1.7" fill="none" stroke-opacity="1" stroke-linejoin="round" stroke-linecap="round" /><path d="M807.5 382.1 L862.0 355.2" stroke="#f5c78c" stroke-width="1.7" fill="none" stroke-opacity="1" stroke-linejoin="round" stroke-linecap="round" /><path d="M572.0 432.6 L592.2 429.2 L612.4 419.1" stroke="#f5c78c" stroke-width="1.7" fill="none" stroke-opacity="1" stroke-linejoin="round" stroke-linecap="round" /><path d="M686.4 457.1 L723.4 455.5 L753.7 450.4 L790.7 448.7 L827.7 445.4" stroke="#f5c78c" stroke-width="1.7" fill="none" stroke-opacity="1" stroke-linejoin="round" stroke-linecap="round" /><path d="M689.8 442.0 L688.1 475.6 L689.8 509.3 L683.0 552.0" stroke="#f5c78c" stroke-width="1.7" fill="none" stroke-opacity="1" stroke-linejoin="round" stroke-linecap="round" /><path d="M747.0 452.1 L740.2 482.4 L733.5 509.3 L726.8 552.0" stroke="#f5c78c" stroke-width="1.7" fill="none" stroke-opacity="1" stroke-linejoin="round" stroke-linecap="round" /><path d="M572.0 519.4 L598.9 509.3 L622.5 499.2 L639.3 485.7 L642.7 462.2 L649.4 442.0" stroke="#f5c78c" stroke-width="1.7" fill="none" stroke-opacity="1" stroke-linejoin="round" stroke-linecap="round" /><path d="M807.5 492.5 L814.3 526.1 L807.5 552.0" stroke="#f5c78c" stroke-width="1.7" fill="none" stroke-opacity="1" stroke-linejoin="round" stroke-linecap="round" /><path d="M87.6 341.0 L99.6 348.9 L108.6 357.9 L117.5 355.9 L131.5 352.9 L150.0 359.9" stroke="#f0a58f" stroke-width="2" fill="none" stroke-opacity="1" stroke-linejoin="round" stroke-linecap="round" /><path d="M39.8 400.7 L43.8 407.7 L59.8 408.7 L85.7 415.7 L99.6 414.7 L119.5 412.7 L150.0 418.7" stroke="#f0a58f" stroke-width="2" fill="none" stroke-opacity="1" stroke-linejoin="round" stroke-linecap="round" /><path d="M183.4 368.6 L181.7 385.5 L175.0 405.7 L168.2 414.1 L158.1 445.0" stroke="#f0a58f" stroke-width="2" fill="none" stroke-opacity="1" stroke-linejoin="round" stroke-linecap="round" /><path d="M191.8 368.6 L198.5 385.5 L195.2 402.3 L185.1 422.5 L181.7 445.0" stroke="#f0a58f" stroke-width="2" fill="none" stroke-opacity="1" stroke-linejoin="round" stroke-linecap="round" /><path d="M161.5 363.6 L183.4 368.6 L191.8 368.6" stroke="#f0a58f" stroke-width="2" fill="none" stroke-opacity="1" stroke-linejoin="round" stroke-linecap="round" /><path d="M172.3 335 L173.3 361.6 L177.2 369.5" stroke="#f0a58f" stroke-width="2" fill="none" stroke-opacity="1" stroke-linejoin="round" stroke-linecap="round" /><path d="M150.0 418.7 L168.2 419.1 L188.4 423.2" stroke="#f0a58f" stroke-width="2" fill="none" stroke-opacity="1" stroke-linejoin="round" stroke-linecap="round" /><path d="M150.1 359.9 L161.5 363.6" stroke="#f0a58f" stroke-width="2" fill="none" stroke-opacity="1" stroke-linejoin="round" stroke-linecap="round" /><path d="M154.8 440.0 L150.7 460.3 L148.7 476.5" stroke="#f0a58f" stroke-width="2" fill="none" stroke-opacity="1" stroke-linejoin="round" stroke-linecap="round" /><path d="M126.4 481.6 L134.5 476.5 L144.7 474.5 L158.9 477.5" stroke="#f0a58f" stroke-width="2" fill="none" stroke-opacity="1" stroke-linejoin="round" stroke-linecap="round" /><path d="M612.4 419.1 L649.4 407.3 L689.8 409.0 L703.2 398.9" stroke="#f0a58f" stroke-width="2" fill="none" stroke-opacity="1" stroke-linejoin="round" stroke-linecap="round" /><path d="M98.6 428.6 L111.6 445.0" stroke="#8f8f8f" stroke-width="1.5" fill="none" stroke-opacity="0.9" stroke-linejoin="round" stroke-linecap="round" /><path d="M100.0 489.7 L130.4 500.9 L156.8 507.0 L175.1 525.2 L197.4 541.5 L209.6 552.0" stroke="#8f8f8f" stroke-width="1.5" fill="none" stroke-opacity="0.9" stroke-linejoin="round" stroke-linecap="round" /><path d="M167.0 488.7 L191.3 480.6 L221.8 473.5 L250.0 456.2" stroke="#8f8f8f" stroke-width="1.5" fill="none" stroke-opacity="0.9" stroke-linejoin="round" stroke-linecap="round" /><path d="M169.0 525.2 L191.3 523.2 L221.8 521.2 L250.0 519.2" stroke="#8f8f8f" stroke-width="1.5" fill="none" stroke-opacity="0.9" stroke-linejoin="round" stroke-linecap="round" /><path d="M217.7 523.2 L238.0 541.5 L250.0 552.0" stroke="#8f8f8f" stroke-width="1.5" fill="none" stroke-opacity="0.9" stroke-linejoin="round" stroke-linecap="round" /><path d="M5.0 447.0 L50.5 467.2 L77.4 480.7 L141.3 500.9" stroke="#8f8f8f" stroke-width="1.5" fill="none" stroke-opacity="0.9" stroke-linejoin="round" stroke-linecap="round" /><path d="M0.0 522.8 L50.5 531.2 L87.5 541.3 L111.0 549.7" stroke="#8f8f8f" stroke-width="1.5" fill="none" stroke-opacity="0.9" stroke-linejoin="round" stroke-linecap="round" /><path d="M262.4 455.5 L290.0 448.7" stroke="#8f8f8f" stroke-width="1.5" fill="none" stroke-opacity="0.9" stroke-linejoin="round" stroke-linecap="round" /><path d="M177.1 440.0 L160.9 466.4 L153.8 486.7" stroke="#8f8f8f" stroke-width="1.5" fill="none" stroke-opacity="0.9" stroke-linejoin="round" stroke-linecap="round" /><path d="M433.0 450.4 L473.4 485.7 L510.4 522.8 L500.3 536.2 L486.9 546.3 L473.4 552.0" stroke="#8f8f8f" stroke-width="1.5" fill="none" stroke-opacity="0.9" stroke-linejoin="round" stroke-linecap="round" /><path d="M285.0 512.7 L352.3 514.3 L396.0 516.0 L416.2 522.8 L446.5 546.3 L453.2 552.0" stroke="#8f8f8f" stroke-width="1.5" fill="none" stroke-opacity="0.9" stroke-linejoin="round" stroke-linecap="round" /><path d="M396.0 442.0 L401.1 475.6 L399.4 509.3 L396.0 552.0" stroke="#8f8f8f" stroke-width="1.5" fill="none" stroke-opacity="0.9" stroke-linejoin="round" stroke-linecap="round" /><path d="M510.4 522.8 L540.7 517.7 L575.0 519.4" stroke="#8f8f8f" stroke-width="1.5" fill="none" stroke-opacity="0.9" stroke-linejoin="round" stroke-linecap="round" /><path d="M544.1 360.2 L534.0 388.8 L520.5 419.1 L513.8 425.8" stroke="#8f8f8f" stroke-width="1.5" fill="none" stroke-opacity="0.9" stroke-linejoin="round" stroke-linecap="round" /><path d="M572.0 435.9 L605.6 425.8 L656.1 415.8 L703.2 410.7 L733.5 397.2 L780.6 392.2 L862.0 404.0" stroke="#8f8f8f" stroke-width="1.5" fill="none" stroke-opacity="0.9" stroke-linejoin="round" stroke-linecap="round" /><path d="M760.4 335.0 L777.2 372.0 L773.9 398.9 L760.4 412.4" stroke="#8f8f8f" stroke-width="1.5" fill="none" stroke-opacity="0.9" stroke-linejoin="round" stroke-linecap="round" /><path d="M572.0 532.8 L605.6 526.1 L656.1 502.6 L716.7 502.6" stroke="#8f8f8f" stroke-width="1.5" fill="none" stroke-opacity="0.9" stroke-linejoin="round" stroke-linecap="round" /><path d="M716.7 502.6 L720.0 526.1 L716.7 552.0" stroke="#8f8f8f" stroke-width="1.5" fill="none" stroke-opacity="0.9" stroke-linejoin="round" stroke-linecap="round" /><path d="M862.0 475.6 L851.3 509.3 L847.9 552.0" stroke="#8f8f8f" stroke-width="1.5" fill="none" stroke-opacity="0.9" stroke-linejoin="round" stroke-linecap="round" /><path d="M5.0 363.9 L14.9 362.9" stroke="#e3879b" stroke-width="2.2" fill="none" stroke-opacity="1" stroke-linejoin="round" stroke-linecap="round" /><path d="M100.0 497.8 L120.3 504.9 L148.7 517.1 L171.0 525.2 L185.2 533.4 L205.5 552.0" stroke="#e3879b" stroke-width="2.2" fill="none" stroke-opacity="1" stroke-linejoin="round" stroke-linecap="round" /><path d="M5.0 457.1 L53.8 480.7 L100.9 500.9" stroke="#e3879b" stroke-width="2.2" fill="none" stroke-opacity="1" stroke-linejoin="round" stroke-linecap="round" /><path d="M158.9 504.9 L179.2 498.9 L201.5 490.7 L221.8 485.7 L250.0 474.5" stroke="#e3879b" stroke-width="2.2" fill="none" stroke-opacity="1" stroke-linejoin="round" stroke-linecap="round" /><path d="M262.4 460.5 L290.0 452.1" stroke="#e3879b" stroke-width="2.2" fill="none" stroke-opacity="1" stroke-linejoin="round" stroke-linecap="round" /><path d="M285.0 452.1 L305.2 448.7 L325.4 442.0" stroke="#e3879b" stroke-width="2.2" fill="none" stroke-opacity="1" stroke-linejoin="round" stroke-linecap="round" /><path d="M154.8 502.9 L148.7 521.2 L140.6 531.3 L120.3 537.4 L100.0 543.5" stroke="#e3879b" stroke-width="2.2" fill="none" stroke-opacity="1" stroke-linejoin="round" stroke-linecap="round" /><path d="M77.4 552.0 L94.2 544.6 L111.0 537.9" stroke="#e3879b" stroke-width="2.2" fill="none" stroke-opacity="1" stroke-linejoin="round" stroke-linecap="round" /><path d="M188.4 424.2 L215.3 419.1 L252.4 405.7 L290.0 400.6" stroke="#e3879b" stroke-width="2.2" fill="none" stroke-opacity="1" stroke-linejoin="round" stroke-linecap="round" /><path d="M362.4 448.7 L352.3 485.7 L347.2 499.2 L340.5 522.8 L338.8 552.0" stroke="#e3879b" stroke-width="2.2" fill="none" stroke-opacity="1" stroke-linejoin="round" stroke-linecap="round" /><path d="M377.5 442.0 L382.6 475.6 L389.3 499.2 L394.4 529.5 L397.7 552.0" stroke="#e3879b" stroke-width="2.2" fill="none" stroke-opacity="1" stroke-linejoin="round" stroke-linecap="round" /><path d="M503.7 442.0 L534.0 448.7 L575.0 468.9" stroke="#e3879b" stroke-width="2.2" fill="none" stroke-opacity="1" stroke-linejoin="round" stroke-linecap="round" /><path d="M473.4 546.3 L500.3 541.3 L540.7 542.9 L575.0 549.7" stroke="#e3879b" stroke-width="2.2" fill="none" stroke-opacity="1" stroke-linejoin="round" stroke-linecap="round" /><path d="M473.4 397.2 L500.3 388.8 L534.0 368.6 L575.0 368.6" stroke="#e3879b" stroke-width="2.2" fill="none" stroke-opacity="1" stroke-linejoin="round" stroke-linecap="round" /><path d="M572.0 368.6 L612.4 365.3 L646.0 348.5 L662.8 335.0" stroke="#e3879b" stroke-width="2.2" fill="none" stroke-opacity="1" stroke-linejoin="round" stroke-linecap="round" /><path d="M743.6 340.0 L760.4 351.8 L777.2 373.7 L797.4 375.4 L821.0 392.2 L834.4 415.8 L847.9 432.6 L862.0 439.3" stroke="#e3879b" stroke-width="2.2" fill="none" stroke-opacity="1" stroke-linejoin="round" stroke-linecap="round" /><path d="M575.0 469.0 L605.6 475.6 L622.5 489.1 L639.3 516.0 L649.4 539.6 L659.5 552.0" stroke="#e3879b" stroke-width="2.2" fill="none" stroke-opacity="1" stroke-linejoin="round" stroke-linecap="round" /><path d="M572.0 542.9 L605.6 536.2 L639.3 526.1 L689.8 517.7 L713.3 519.4 L740.2 532.8 L773.9 546.3 L807.5 549.7 L862.0 539.6" stroke="#e3879b" stroke-width="2.2" fill="none" stroke-opacity="1" stroke-linejoin="round" stroke-linecap="round" /><path d="M837.1 420 L844.3 429.6 L862 443.9" stroke="#e3879b" stroke-width="2.2" fill="none" stroke-opacity="1" stroke-linejoin="round" stroke-linecap="round" /><path d="M862 453.5 L844.3 472.6 L837.1 491.7 L830 510.8 L822.8 532.4 L820.4 552" stroke="#e3879b" stroke-width="2.2" fill="none" stroke-opacity="1" stroke-linejoin="round" stroke-linecap="round" /><path d="M158.9 477.5 L171.0 480.6 L178.1 488.7 L181.2 500.9 L178.1 511.0 L169.0 518.1 L158.9 516.1 L148.7 517.1 L138.6 511.0 L129.4 503.9 L125.4 492.8 L126.4 481.6 L134.5 476.5 L144.7 474.5 L158.9 477.5" stroke="#e3879b" stroke-width="2.2" fill="none" stroke-opacity="1" stroke-linejoin="round" stroke-linecap="round" /><path d="M32 335 L33.5 343" stroke="#a98aab" stroke-width="3" fill="none" stroke-opacity="0.75" stroke-linejoin="round" stroke-linecap="round" /><path d="M5 375 L20 378 L30 383 L43.8 387.8 L49.8 394.8 L55.8 396.8 L83.7 394.8 L81.7 372.8 L87.6 373.8 L93.6 370.9 L99.6 369.9 L103.6 364.9 L111.5 368.9 L119.5 371.9 L131.5 374.8 L139.4 377.8 L150 381.8 L164.9 387.2 L169.9 393.9 L169.9 404 L178.3 410.7 L186.7 410.7 L195.2 407.3 L201.9 410.7 L203.6 417.4 L212 414.1 L222.1 409 L235.5 402.3 L249 395.6 L259.1 395.6 L294 373" stroke="#a98aab" stroke-width="3" fill="none" stroke-opacity="0.75" stroke-linejoin="round" stroke-linecap="round" /><path d="M605.6 335 L607.3 341.7 L609 356.9 L622.5 360.2 L634.2 355.2 L642.7 363.6 L641 383.8 L652.8 385.5 L673 385.5 L679.7 378.7 L696.5 382.1 L706.6 378.7 L716.7 370.3 L726.8 367 L736.9 373.7 L747 385.5 L748.6 404 L762.1 409 L777.2 417.4 L782.3 425.8 L807.5 425.8 L821 430.9 L821 442.7 L837.8 435.9 L841.2 445" stroke="#a98aab" stroke-width="3" fill="none" stroke-opacity="0.75" stroke-linejoin="round" stroke-linecap="round" /><path d="M777.4 420 L779.8 424.8 L791.7 427.2 L815.6 427.2 L820.4 434.3 L820.4 441.5 L834.7 436.7 L844.3 443.9 L841.9 453.5 L832.4 460.6 L830 467.8 L827.6 479.8 L825.2 491.7 L818 503.7 L815.6 520.4 L808.5 532.4 L801.3 544.3 L803.7 552" stroke="#a98aab" stroke-width="3" fill="none" stroke-opacity="0.75" stroke-linejoin="round" stroke-linecap="round" /><path d="M862 489.3 L853.9 494.1 L851.5 503.7 L858.7 515.6 L862 522.8" stroke="#a98aab" stroke-width="3" fill="none" stroke-opacity="0.75" stroke-linejoin="round" stroke-linecap="round" /><text x="5" y="347.9" textLength="28" lengthAdjust="spacingAndGlyphs" font-size="10.45" class="lb">e-Heist</text><text x="5" y="347.9" textLength="28" lengthAdjust="spacingAndGlyphs" font-size="10.45" class="lt">e-Heist</text><text x="51.8" y="356.9" textLength="40.2" lengthAdjust="spacingAndGlyphs" font-size="10.78" class="lb">Oostburg</text><text x="51.8" y="356.9" textLength="40.2" lengthAdjust="spacingAndGlyphs" font-size="10.78" class="lt">Oostburg</text><text x="163.9" y="357.5" textLength="43.7" lengthAdjust="spacingAndGlyphs" font-size="10.78" class="lb">Terneuzen</text><text x="163.9" y="357.5" textLength="43.7" lengthAdjust="spacingAndGlyphs" font-size="10.78" class="lt">Terneuzen</text><text x="244.6" y="380.4" textLength="22.2" lengthAdjust="spacingAndGlyphs" font-size="10.78" class="lb">Hulst</text><text x="244.6" y="380.4" textLength="22.2" lengthAdjust="spacingAndGlyphs" font-size="10.78" class="lt">Hulst</text><text x="137" y="409.0" textLength="40.3" lengthAdjust="spacingAndGlyphs" font-size="10.78" class="lb">Assenede</text><text x="137" y="409.0" textLength="40.3" lengthAdjust="spacingAndGlyphs" font-size="10.78" class="lt">Assenede</text><text x="161.5" y="423.3" textLength="29.3" lengthAdjust="spacingAndGlyphs" font-size="11.33" class="lb">Zelzate</text><text x="161.5" y="423.3" textLength="29.3" lengthAdjust="spacingAndGlyphs" font-size="11.33" class="lt">Zelzate</text><text x="33.9" y="418.7" textLength="44.2" lengthAdjust="spacingAndGlyphs" font-size="10.78" class="lb">Maldegem</text><text x="33.9" y="418.7" textLength="44.2" lengthAdjust="spacingAndGlyphs" font-size="10.78" class="lt">Maldegem</text><text x="259" y="408.0" textLength="48" lengthAdjust="spacingAndGlyphs" font-size="10.78" class="lb">Sint-Gillis-</text><text x="259" y="408.0" textLength="48" lengthAdjust="spacingAndGlyphs" font-size="10.78" class="lt">Sint-Gillis-</text><text x="269" y="419.8" textLength="22" lengthAdjust="spacingAndGlyphs" font-size="10.78" class="lb">Waas</text><text x="269" y="419.8" textLength="22" lengthAdjust="spacingAndGlyphs" font-size="10.78" class="lt">Waas</text><text x="198.5" y="437.2" textLength="42.8" lengthAdjust="spacingAndGlyphs" font-size="10.78" class="lb">Moerbeke</text><text x="198.5" y="437.2" textLength="42.8" lengthAdjust="spacingAndGlyphs" font-size="10.78" class="lt">Moerbeke</text><text x="261.8" y="441.6" textLength="53.2" lengthAdjust="spacingAndGlyphs" font-size="10.78" class="lb">Sint-Niklaas</text><text x="261.8" y="441.6" textLength="53.2" lengthAdjust="spacingAndGlyphs" font-size="10.78" class="lt">Sint-Niklaas</text><text x="-1" y="454.0" textLength="39" lengthAdjust="spacingAndGlyphs" font-size="10.78" class="lb">Beernem</text><text x="-1" y="454.0" textLength="39" lengthAdjust="spacingAndGlyphs" font-size="10.78" class="lt">Beernem</text><text x="45" y="484.0" textLength="24" lengthAdjust="spacingAndGlyphs" font-size="10.78" class="lb">Aalter</text><text x="45" y="484.0" textLength="24" lengthAdjust="spacingAndGlyphs" font-size="10.78" class="lt">Aalter</text><text x="124.4" y="471.4" textLength="36.5" lengthAdjust="spacingAndGlyphs" font-size="10.78" class="lb">Evergem</text><text x="124.4" y="471.4" textLength="36.5" lengthAdjust="spacingAndGlyphs" font-size="10.78" class="lt">Evergem</text><text x="136.5" y="501.5" textLength="23.4" lengthAdjust="spacingAndGlyphs" font-size="13.75" class="lb">Gent</text><text x="136.5" y="501.5" textLength="23.4" lengthAdjust="spacingAndGlyphs" font-size="13.75" class="lt">Gent</text><text x="217.7" y="474.0" textLength="33.3" lengthAdjust="spacingAndGlyphs" font-size="10.78" class="lb">Lokeren</text><text x="217.7" y="474.0" textLength="33.3" lengthAdjust="spacingAndGlyphs" font-size="10.78" class="lt">Lokeren</text><text x="267.5" y="477.0" textLength="32.5" lengthAdjust="spacingAndGlyphs" font-size="10.78" class="lb">Hamme</text><text x="267.5" y="477.0" textLength="32.5" lengthAdjust="spacingAndGlyphs" font-size="10.78" class="lt">Hamme</text><text x="242" y="492.0" textLength="17" lengthAdjust="spacingAndGlyphs" font-size="10.78" class="lb">Zele</text><text x="242" y="492.0" textLength="17" lengthAdjust="spacingAndGlyphs" font-size="10.78" class="lt">Zele</text><text x="239.6" y="512.0" textLength="60.4" lengthAdjust="spacingAndGlyphs" font-size="10.78" class="lb">Dendermonde</text><text x="239.6" y="512.0" textLength="60.4" lengthAdjust="spacingAndGlyphs" font-size="10.78" class="lt">Dendermonde</text><text x="8.4" y="527.8" textLength="17.6" lengthAdjust="spacingAndGlyphs" font-size="10.78" class="lb">Tielt</text><text x="8.4" y="527.8" textLength="17.6" lengthAdjust="spacingAndGlyphs" font-size="10.78" class="lt">Tielt</text><text x="106.1" y="531.7" textLength="35.5" lengthAdjust="spacingAndGlyphs" font-size="10.78" class="lb">De Pinte</text><text x="106.1" y="531.7" textLength="35.5" lengthAdjust="spacingAndGlyphs" font-size="10.78" class="lt">De Pinte</text><text x="181.2" y="524.2" textLength="38.5" lengthAdjust="spacingAndGlyphs" font-size="10.78" class="lb">Wetteren</text><text x="181.2" y="524.2" textLength="38.5" lengthAdjust="spacingAndGlyphs" font-size="10.78" class="lt">Wetteren</text><text x="262.4" y="528.0" textLength="36.1" lengthAdjust="spacingAndGlyphs" font-size="10.78" class="lb">Lebbeke</text><text x="262.4" y="528.0" textLength="36.1" lengthAdjust="spacingAndGlyphs" font-size="10.78" class="lt">Lebbeke</text><text x="23.6" y="546.0" textLength="47.7" lengthAdjust="spacingAndGlyphs" font-size="10.78" class="lb">Dentergem</text><text x="23.6" y="546.0" textLength="47.7" lengthAdjust="spacingAndGlyphs" font-size="10.78" class="lt">Dentergem</text><text x="220.8" y="545.5" textLength="20.3" lengthAdjust="spacingAndGlyphs" font-size="10.78" class="lb">Lede</text><text x="220.8" y="545.5" textLength="20.3" lengthAdjust="spacingAndGlyphs" font-size="10.78" class="lt">Lede</text><text x="295" y="462.0" textLength="26.3" lengthAdjust="spacingAndGlyphs" font-size="10.78" class="lb">Temse</text><text x="295" y="462.0" textLength="26.3" lengthAdjust="spacingAndGlyphs" font-size="10.78" class="lt">Temse</text><text x="368.4" y="457.0" textLength="31.6" lengthAdjust="spacingAndGlyphs" font-size="10.78" class="lb">Kontich</text><text x="368.4" y="457.0" textLength="31.6" lengthAdjust="spacingAndGlyphs" font-size="10.78" class="lt">Kontich</text><text x="417" y="460.0" textLength="15.4" lengthAdjust="spacingAndGlyphs" font-size="10.78" class="lb">Lier</text><text x="417" y="460.0" textLength="15.4" lengthAdjust="spacingAndGlyphs" font-size="10.78" class="lt">Lier</text><text x="461.6" y="455.4" textLength="48.2" lengthAdjust="spacingAndGlyphs" font-size="10.78" class="lb">Herenthout</text><text x="461.6" y="455.4" textLength="48.2" lengthAdjust="spacingAndGlyphs" font-size="10.78" class="lt">Herenthout</text><text x="346" y="482.0" textLength="24.8" lengthAdjust="spacingAndGlyphs" font-size="10.78" class="lb">Boom</text><text x="346" y="482.0" textLength="24.8" lengthAdjust="spacingAndGlyphs" font-size="10.78" class="lt">Boom</text><text x="391" y="478.0" textLength="26" lengthAdjust="spacingAndGlyphs" font-size="10.78" class="lb">Duffel</text><text x="391" y="478.0" textLength="26" lengthAdjust="spacingAndGlyphs" font-size="10.78" class="lt">Duffel</text><text x="333" y="497.0" textLength="44.5" lengthAdjust="spacingAndGlyphs" font-size="10.78" class="lb">Willebroek</text><text x="333" y="497.0" textLength="44.5" lengthAdjust="spacingAndGlyphs" font-size="10.78" class="lt">Willebroek</text><text x="477.5" y="488.7" textLength="38.5" lengthAdjust="spacingAndGlyphs" font-size="10.78" class="lb">Hulshout</text><text x="477.5" y="488.7" textLength="38.5" lengthAdjust="spacingAndGlyphs" font-size="10.78" class="lt">Hulshout</text><text x="552" y="486.4" textLength="38" lengthAdjust="spacingAndGlyphs" font-size="10.78" class="lb">Laakdal</text><text x="552" y="486.4" textLength="38" lengthAdjust="spacingAndGlyphs" font-size="10.78" class="lt">Laakdal</text><text x="434" y="498.0" textLength="22" lengthAdjust="spacingAndGlyphs" font-size="10.78" class="lb">Putte</text><text x="434" y="498.0" textLength="22" lengthAdjust="spacingAndGlyphs" font-size="10.78" class="lt">Putte</text><text x="371.8" y="514.2" textLength="48.2" lengthAdjust="spacingAndGlyphs" font-size="13.2" class="lb">Mechelen</text><text x="371.8" y="514.2" textLength="48.2" lengthAdjust="spacingAndGlyphs" font-size="13.2" class="lt">Mechelen</text><text x="468.4" y="519.0" textLength="51.6" lengthAdjust="spacingAndGlyphs" font-size="10.78" class="lb">Begijnendijk</text><text x="468.4" y="519.0" textLength="51.6" lengthAdjust="spacingAndGlyphs" font-size="10.78" class="lt">Begijnendijk</text><text x="314.6" y="526.8" textLength="46.1" lengthAdjust="spacingAndGlyphs" font-size="10.78" class="lb">Londerzeel</text><text x="314.6" y="526.8" textLength="46.1" lengthAdjust="spacingAndGlyphs" font-size="10.78" class="lt">Londerzeel</text><text x="452" y="531.8" textLength="34" lengthAdjust="spacingAndGlyphs" font-size="10.78" class="lb">Tremelo</text><text x="452" y="531.8" textLength="34" lengthAdjust="spacingAndGlyphs" font-size="10.78" class="lt">Tremelo</text><text x="522" y="532.8" textLength="70" lengthAdjust="spacingAndGlyphs" font-size="10.78" class="lb">Scherpenheuvel</text><text x="522" y="532.8" textLength="70" lengthAdjust="spacingAndGlyphs" font-size="10.78" class="lt">Scherpenheuvel</text><text x="293.4" y="548.6" textLength="42.6" lengthAdjust="spacingAndGlyphs" font-size="10.78" class="lb">Merchtem</text><text x="293.4" y="548.6" textLength="42.6" lengthAdjust="spacingAndGlyphs" font-size="10.78" class="lt">Merchtem</text><text x="542.4" y="544.0" textLength="31.3" lengthAdjust="spacingAndGlyphs" font-size="10.78" class="lb">Zichem</text><text x="542.4" y="544.0" textLength="31.3" lengthAdjust="spacingAndGlyphs" font-size="10.78" class="lt">Zichem</text><text x="450.9" y="553.0" textLength="39.1" lengthAdjust="spacingAndGlyphs" font-size="10.78" class="lb">Rotselaar</text><text x="450.9" y="553.0" textLength="39.1" lengthAdjust="spacingAndGlyphs" font-size="10.78" class="lt">Rotselaar</text><text x="498.7" y="340.7" textLength="35.3" lengthAdjust="spacingAndGlyphs" font-size="10.78" class="lb">Merksplas</text><text x="498.7" y="340.7" textLength="35.3" lengthAdjust="spacingAndGlyphs" font-size="10.78" class="lt">Merksplas</text><text x="529" y="358.5" textLength="40.3" lengthAdjust="spacingAndGlyphs" font-size="10.78" class="lb">Turnhout</text><text x="529" y="358.5" textLength="40.3" lengthAdjust="spacingAndGlyphs" font-size="10.78" class="lt">Turnhout</text><text x="450" y="373.0" textLength="28" lengthAdjust="spacingAndGlyphs" font-size="10.78" class="lb">Beerse</text><text x="450" y="373.0" textLength="28" lengthAdjust="spacingAndGlyphs" font-size="10.78" class="lt">Beerse</text><text x="435" y="386.0" textLength="52" lengthAdjust="spacingAndGlyphs" font-size="10.78" class="lb">Rijkevorsel</text><text x="435" y="386.0" textLength="52" lengthAdjust="spacingAndGlyphs" font-size="10.78" class="lt">Rijkevorsel</text><text x="430" y="416.0" textLength="48" lengthAdjust="spacingAndGlyphs" font-size="10.78" class="lb">Zandhoven</text><text x="430" y="416.0" textLength="48" lengthAdjust="spacingAndGlyphs" font-size="10.78" class="lt">Zandhoven</text><text x="499.7" y="403.0" textLength="16.8" lengthAdjust="spacingAndGlyphs" font-size="10.78" class="lb">Lille</text><text x="499.7" y="403.0" textLength="16.8" lengthAdjust="spacingAndGlyphs" font-size="10.78" class="lt">Lille</text><text x="535.7" y="402.0" textLength="41.3" lengthAdjust="spacingAndGlyphs" font-size="10.78" class="lb">Kasterlee</text><text x="535.7" y="402.0" textLength="41.3" lengthAdjust="spacingAndGlyphs" font-size="10.78" class="lt">Kasterlee</text><text x="492" y="436.0" textLength="40.3" lengthAdjust="spacingAndGlyphs" font-size="10.78" class="lb">Herentals</text><text x="492" y="436.0" textLength="40.3" lengthAdjust="spacingAndGlyphs" font-size="10.78" class="lt">Herentals</text><text x="554" y="444.0" textLength="16" lengthAdjust="spacingAndGlyphs" font-size="10.78" class="lb">Geel</text><text x="554" y="444.0" textLength="16" lengthAdjust="spacingAndGlyphs" font-size="10.78" class="lt">Geel</text><text x="572" y="459.5" textLength="39.7" lengthAdjust="spacingAndGlyphs" font-size="10.78" class="lb">Meerhout</text><text x="572" y="459.5" textLength="39.7" lengthAdjust="spacingAndGlyphs" font-size="10.78" class="lt">Meerhout</text><text x="605.6" y="337.0" textLength="28.4" lengthAdjust="spacingAndGlyphs" font-size="10.78" class="lb">Reusel</text><text x="605.6" y="337.0" textLength="28.4" lengthAdjust="spacingAndGlyphs" font-size="10.78" class="lt">Reusel</text><text x="686.4" y="344.7" textLength="58.9" lengthAdjust="spacingAndGlyphs" font-size="10.78" class="lb">Valkenswaard</text><text x="686.4" y="344.7" textLength="58.9" lengthAdjust="spacingAndGlyphs" font-size="10.78" class="lt">Valkenswaard</text><text x="583.8" y="387.8" textLength="20.2" lengthAdjust="spacingAndGlyphs" font-size="10.78" class="lb">Retie</text><text x="583.8" y="387.8" textLength="20.2" lengthAdjust="spacingAndGlyphs" font-size="10.78" class="lt">Retie</text><text x="589.5" y="402.3" textLength="26.9" lengthAdjust="spacingAndGlyphs" font-size="10.78" class="lb">Dessel</text><text x="589.5" y="402.3" textLength="26.9" lengthAdjust="spacingAndGlyphs" font-size="10.78" class="lt">Dessel</text><text x="650" y="407.3" textLength="33.7" lengthAdjust="spacingAndGlyphs" font-size="10.78" class="lb">Lommel</text><text x="650" y="407.3" textLength="33.7" lengthAdjust="spacingAndGlyphs" font-size="10.78" class="lt">Lommel</text><text x="698.8" y="412.4" textLength="15.5" lengthAdjust="spacingAndGlyphs" font-size="10.78" class="lb">Pelt</text><text x="698.8" y="412.4" textLength="15.5" lengthAdjust="spacingAndGlyphs" font-size="10.78" class="lt">Pelt</text><text x="704.2" y="393.8" textLength="59.6" lengthAdjust="spacingAndGlyphs" font-size="10.78" class="lb">Hamont-Achel</text><text x="704.2" y="393.8" textLength="59.6" lengthAdjust="spacingAndGlyphs" font-size="10.78" class="lt">Hamont-Achel</text><text x="784.6" y="395.7" textLength="25.6" lengthAdjust="spacingAndGlyphs" font-size="11.33" class="lb">Weert</text><text x="784.6" y="395.7" textLength="25.6" lengthAdjust="spacingAndGlyphs" font-size="11.33" class="lt">Weert</text><text x="595.6" y="430.5" textLength="16.1" lengthAdjust="spacingAndGlyphs" font-size="10.78" class="lb">Mol</text><text x="595.6" y="430.5" textLength="16.1" lengthAdjust="spacingAndGlyphs" font-size="10.78" class="lt">Mol</text><text x="739.2" y="437.6" textLength="31.3" lengthAdjust="spacingAndGlyphs" font-size="10.78" class="lb">Bocholt</text><text x="739.2" y="437.6" textLength="31.3" lengthAdjust="spacingAndGlyphs" font-size="10.78" class="lt">Bocholt</text><text x="622.5" y="466.2" textLength="58.9" lengthAdjust="spacingAndGlyphs" font-size="10.78" class="lb">Leopoldsburg</text><text x="622.5" y="466.2" textLength="58.9" lengthAdjust="spacingAndGlyphs" font-size="10.78" class="lt">Leopoldsburg</text><text x="705" y="459.5" textLength="19" lengthAdjust="spacingAndGlyphs" font-size="10.78" class="lb">Peer</text><text x="705" y="459.5" textLength="19" lengthAdjust="spacingAndGlyphs" font-size="10.78" class="lt">Peer</text><text x="752" y="453.4" textLength="20.2" lengthAdjust="spacingAndGlyphs" font-size="10.78" class="lb">Bree</text><text x="752" y="453.4" textLength="20.2" lengthAdjust="spacingAndGlyphs" font-size="10.78" class="lt">Bree</text><text x="794" y="452.0" textLength="29.7" lengthAdjust="spacingAndGlyphs" font-size="10.78" class="lb">Kinrooi</text><text x="794" y="452.0" textLength="29.7" lengthAdjust="spacingAndGlyphs" font-size="10.78" class="lt">Kinrooi</text><text x="809.2" y="478.6" textLength="33.8" lengthAdjust="spacingAndGlyphs" font-size="10.78" class="lb">Maaseik</text><text x="809.2" y="478.6" textLength="33.8" lengthAdjust="spacingAndGlyphs" font-size="10.78" class="lt">Maaseik</text><text x="620.8" y="503.2" textLength="38.7" lengthAdjust="spacingAndGlyphs" font-size="10.78" class="lb">Beringen</text><text x="620.8" y="503.2" textLength="38.7" lengthAdjust="spacingAndGlyphs" font-size="10.78" class="lt">Beringen</text><text x="666.2" y="498.2" textLength="46.4" lengthAdjust="spacingAndGlyphs" font-size="10.78" class="lb">Houthalen-</text><text x="666.2" y="498.2" textLength="46.4" lengthAdjust="spacingAndGlyphs" font-size="10.78" class="lt">Houthalen-</text><text x="666.2" y="509.0" textLength="46.4" lengthAdjust="spacingAndGlyphs" font-size="10.78" class="lb">Helchteren</text><text x="666.2" y="509.0" textLength="46.4" lengthAdjust="spacingAndGlyphs" font-size="10.78" class="lt">Helchteren</text><text x="721.7" y="493.0" textLength="53.9" lengthAdjust="spacingAndGlyphs" font-size="10.78" class="lb">Oudsbergen</text><text x="721.7" y="493.0" textLength="53.9" lengthAdjust="spacingAndGlyphs" font-size="10.78" class="lt">Oudsbergen</text><text x="773.2" y="513.3" textLength="65.3" lengthAdjust="spacingAndGlyphs" font-size="10.78" class="lb">Dilsen-Stokkem</text><text x="773.2" y="513.3" textLength="65.3" lengthAdjust="spacingAndGlyphs" font-size="10.78" class="lt">Dilsen-Stokkem</text><text x="836.4" y="529.2" textLength="30.6" lengthAdjust="spacingAndGlyphs" font-size="10.78" class="lb">Sittard</text><text x="836.4" y="529.2" textLength="30.6" lengthAdjust="spacingAndGlyphs" font-size="10.78" class="lt">Sittard</text><text x="610.7" y="535.2" textLength="37.0" lengthAdjust="spacingAndGlyphs" font-size="10.78" class="lb">Lummen</text><text x="610.7" y="535.2" textLength="37.0" lengthAdjust="spacingAndGlyphs" font-size="10.78" class="lt">Lummen</text><text x="665.5" y="531.8" textLength="41.8" lengthAdjust="spacingAndGlyphs" font-size="10.78" class="lb">Zonhoven</text><text x="665.5" y="531.8" textLength="41.8" lengthAdjust="spacingAndGlyphs" font-size="10.78" class="lt">Zonhoven</text><text x="719.4" y="546.3" textLength="20.8" lengthAdjust="spacingAndGlyphs" font-size="10.78" class="lb">Genk</text><text x="719.4" y="546.3" textLength="20.8" lengthAdjust="spacingAndGlyphs" font-size="10.78" class="lt">Genk</text><text x="822.7" y="545.3" textLength="29.3" lengthAdjust="spacingAndGlyphs" font-size="10.78" class="lb">Geleen</text><text x="822.7" y="545.3" textLength="29.3" lengthAdjust="spacingAndGlyphs" font-size="10.78" class="lt">Geleen</text><text x="831" y="388.5" font-size="10.5" font-style="italic" fill="#9a6fa6" textLength="40" lengthAdjust="spacingAndGlyphs">Limburg</text><text x="753.7" y="542.5" font-size="9.5" font-style="italic" fill="#4f9a5a" textLength="44.3" lengthAdjust="spacingAndGlyphs" class="lg">Nationaal</text><text x="753.7" y="553" font-size="9.5" font-style="italic" fill="#4f9a5a" textLength="40.3" lengthAdjust="spacingAndGlyphs" class="lg">Park Hoge</text></svg></div>
<div class="a" style="left:14px;top:344px;width:31px;height:57px;border:2px solid rgba(0,0,0,.17);border-radius:4px;background:#fff;background-clip:padding-box"></div>
<div class="a" style="left:16px;top:371px;width:27px;height:1px;background:#ccc"></div>
<svg class="a" style="left:22px;top:350px" width="16" height="16" viewBox="0 0 16 16"><path d="M8 2.3V13.7M2.3 8H13.7" stroke="#000" stroke-width="2.4"/></svg>
<svg class="a" style="left:22px;top:378px" width="16" height="16" viewBox="0 0 16 16"><path d="M2.3 8H13.7" stroke="#000" stroke-width="2.4"/></svg>
<!-- dropdown -->
<div class="a" style="left:304px;top:148px;width:0;height:0;border-left:5px solid transparent;border-right:5px solid transparent;border-bottom:5px solid #fff"></div>
<div class="a" id="dd">
<div class="di" style="top:0;background:linear-gradient(#005d94 0,#005d94 1px,#0088cc 1px,#0077b3);color:#fff;font-weight:normal;-webkit-text-stroke:.65px #fff;border-top:none;line-height:36.5px"><span style="transform:scaleX(.89)">Race Belgie</span></div>
<div class="di" style="top:37px"><span>Race Duitsland</span></div>
<div class="di" style="top:74px"><span>Race Frankrijk</span></div>
<div class="di" style="top:111px"><span>Race Italie</span></div>
<div class="di" style="top:148px"><span>Race Luxemburg</span></div>
<div class="di" style="top:185px"><span>Race Nederland</span></div>
<div class="di" style="top:222px"><span>Race Nieuw Zeeland</span></div>
<div class="di" style="top:259px"><span>Race Spanje</span></div>
</div>
</body></html>
